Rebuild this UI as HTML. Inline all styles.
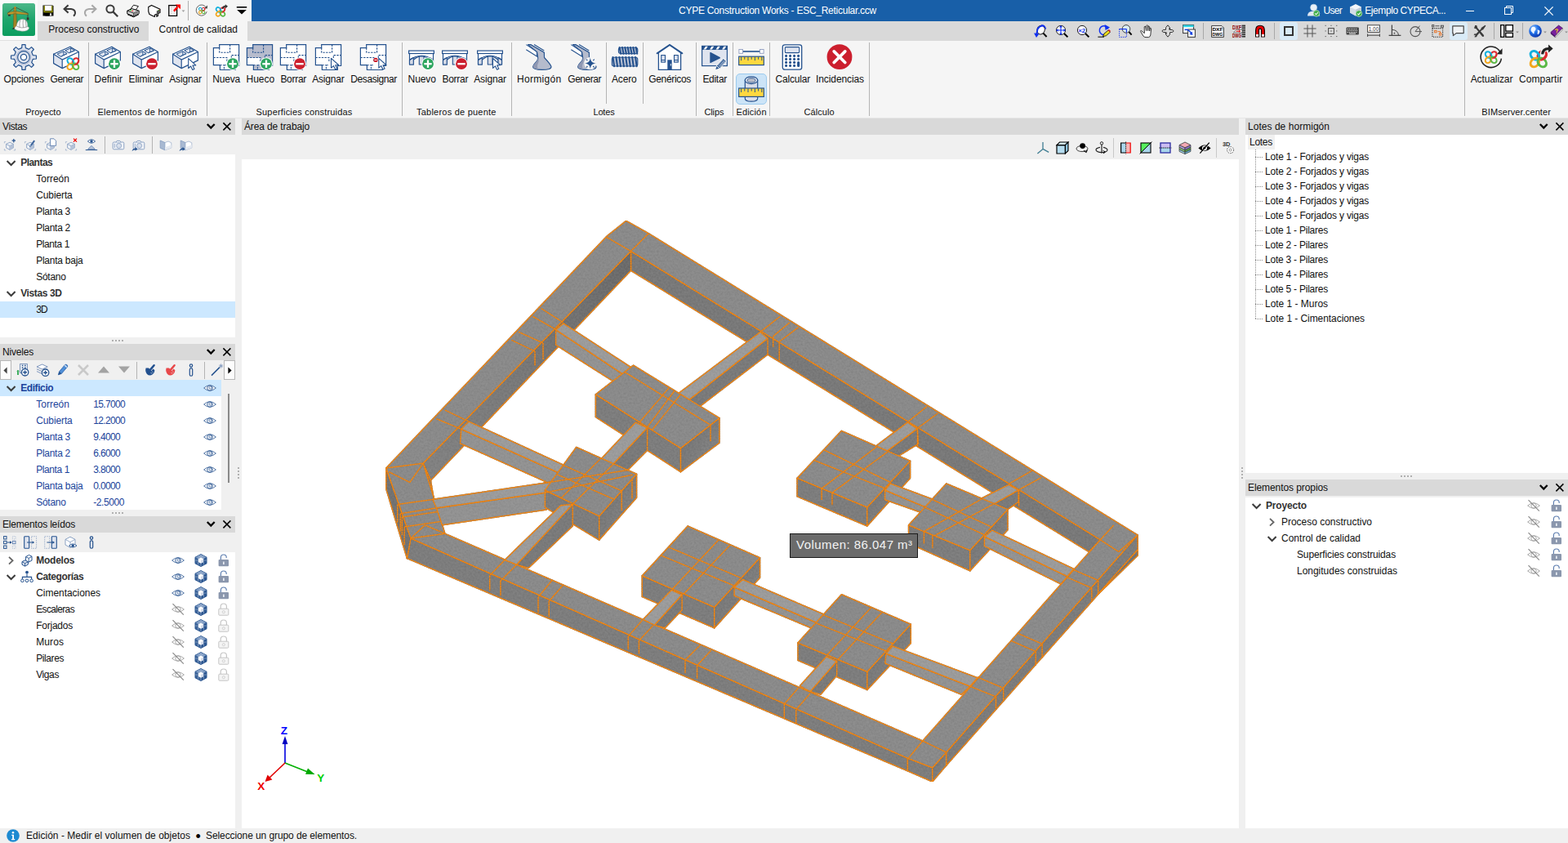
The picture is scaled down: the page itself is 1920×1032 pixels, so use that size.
<!DOCTYPE html>
<html lang="es"><head><meta charset="utf-8"><title>CYPE Construction Works - ESC_Reticular.ccw</title><style>
html,body{margin:0;padding:0;}
body{width:1920px;height:1032px;overflow:hidden;background:#f0f0f0;position:relative;font-family:"Liberation Sans",sans-serif;font-size:12px;}
.b{position:absolute;display:block;}
.t{position:absolute;white-space:nowrap;display:block;}
</style></head>
<body>
<div class="b" style="left:0px;top:0px;width:1920px;height:26px;background:#185fa8;"></div>
<div class="b" style="left:0px;top:0px;width:308px;height:26px;background:#f5f5f5;"></div>
<div class="b" style="left:0px;top:26px;width:1920px;height:24px;background:#d9d9d9;"></div>
<div class="b" style="left:0px;top:0px;width:46px;height:49px;background:#fafafa;"></div>
<div class="b" style="left:0px;top:49px;width:46px;height:1px;background:#e0e0e0;"></div>
<div class="b" style="left:182px;top:26px;width:121px;height:24px;background:#f5f5f5;"></div>
<span class="t" style="left:831.00px;top:4.84px;line-height:16px;color:#fff;letter-spacing:-0.260px;">CYPE Construction Works - ESC_Reticular.ccw</span>
<span class="t" style="left:1620.50px;top:4.84px;line-height:16px;color:#fff;letter-spacing:-0.711px;">User</span>
<span class="t" style="left:1671.20px;top:4.84px;line-height:16px;color:#fff;letter-spacing:-0.413px;">Ejemplo CYPECA...</span>
<span class="t" style="left:59.30px;top:27.84px;line-height:16px;color:#101010;letter-spacing:-0.018px;">Proceso constructivo</span>
<span class="t" style="left:194.50px;top:27.84px;line-height:16px;color:#101010;letter-spacing:-0.012px;">Control de calidad</span>
<div class="b" style="left:0px;top:50px;width:1920px;height:94px;background:#f5f5f5;"></div>
<div class="b" style="left:0px;top:144px;width:1920px;height:1px;background:#e6e6e6;"></div>
<div class="b" style="left:108px;top:52px;width:1px;height:90px;background:#b4b4b4;"></div>
<div class="b" style="left:253px;top:52px;width:1px;height:90px;background:#b4b4b4;"></div>
<div class="b" style="left:492px;top:52px;width:1px;height:90px;background:#b4b4b4;"></div>
<div class="b" style="left:626px;top:52px;width:1px;height:90px;background:#b4b4b4;"></div>
<div class="b" style="left:742px;top:52px;width:1px;height:75px;background:#b4b4b4;"></div>
<div class="b" style="left:787px;top:52px;width:1px;height:75px;background:#b4b4b4;"></div>
<div class="b" style="left:852px;top:52px;width:1px;height:90px;background:#b4b4b4;"></div>
<div class="b" style="left:897px;top:52px;width:1px;height:90px;background:#b4b4b4;"></div>
<div class="b" style="left:942px;top:52px;width:1px;height:90px;background:#b4b4b4;"></div>
<div class="b" style="left:1064px;top:52px;width:1px;height:90px;background:#b4b4b4;"></div>
<div class="b" style="left:1793px;top:52px;width:1px;height:90px;background:#b4b4b4;"></div>
<span class="t" style="left:4.50px;top:89.24px;line-height:16px;color:#101010;letter-spacing:-0.148px;">Opciones</span>
<span class="t" style="left:61.60px;top:89.24px;line-height:16px;color:#101010;letter-spacing:-0.517px;">Generar</span>
<span class="t" style="left:115.50px;top:89.24px;line-height:16px;color:#101010;letter-spacing:-0.027px;">Definir</span>
<span class="t" style="left:157.50px;top:89.24px;line-height:16px;color:#101010;letter-spacing:-0.107px;">Eliminar</span>
<span class="t" style="left:207.20px;top:89.24px;line-height:16px;color:#101010;letter-spacing:-0.127px;">Asignar</span>
<span class="t" style="left:260.30px;top:89.24px;line-height:16px;color:#101010;letter-spacing:-0.198px;">Nueva</span>
<span class="t" style="left:301.60px;top:89.24px;line-height:16px;color:#101010;letter-spacing:-0.058px;">Hueco</span>
<span class="t" style="left:343.40px;top:89.24px;line-height:16px;color:#101010;letter-spacing:-0.291px;">Borrar</span>
<span class="t" style="left:382.20px;top:89.24px;line-height:16px;color:#101010;letter-spacing:-0.170px;">Asignar</span>
<span class="t" style="left:429.30px;top:89.24px;line-height:16px;color:#101010;letter-spacing:-0.420px;">Desasignar</span>
<span class="t" style="left:499.60px;top:89.24px;line-height:16px;color:#101010;letter-spacing:-0.098px;">Nuevo</span>
<span class="t" style="left:541.40px;top:89.24px;line-height:16px;color:#101010;letter-spacing:-0.257px;">Borrar</span>
<span class="t" style="left:580.20px;top:89.24px;line-height:16px;color:#101010;letter-spacing:-0.127px;">Asignar</span>
<span class="t" style="left:633.00px;top:89.24px;line-height:16px;color:#101010;letter-spacing:0.321px;">Hormigón</span>
<span class="t" style="left:695.30px;top:89.24px;line-height:16px;color:#101010;letter-spacing:-0.474px;">Generar</span>
<span class="t" style="left:749.00px;top:89.24px;line-height:16px;color:#101010;letter-spacing:-0.149px;">Acero</span>
<span class="t" style="left:794.20px;top:89.24px;line-height:16px;color:#101010;letter-spacing:-0.321px;">Genéricos</span>
<span class="t" style="left:860.40px;top:89.24px;line-height:16px;color:#101010;letter-spacing:-0.291px;">Editar</span>
<span class="t" style="left:949.60px;top:89.24px;line-height:16px;color:#101010;letter-spacing:-0.204px;">Calcular</span>
<span class="t" style="left:999.00px;top:89.24px;line-height:16px;color:#101010;letter-spacing:-0.094px;">Incidencias</span>
<span class="t" style="left:1800.70px;top:89.24px;line-height:16px;color:#101010;letter-spacing:-0.109px;">Actualizar</span>
<span class="t" style="left:1860.00px;top:89.24px;line-height:16px;color:#101010;letter-spacing:0.068px;">Compartir</span>
<span class="t" style="left:31.30px;top:129.69px;line-height:15px;font-size:11px;color:#101010;letter-spacing:-0.030px;">Proyecto</span>
<span class="t" style="left:119.50px;top:129.69px;line-height:15px;font-size:11px;color:#101010;letter-spacing:0.274px;">Elementos de hormigón</span>
<span class="t" style="left:313.50px;top:129.69px;line-height:15px;font-size:11px;color:#101010;letter-spacing:0.188px;">Superficies construidas</span>
<span class="t" style="left:510.00px;top:129.69px;line-height:15px;font-size:11px;color:#101010;letter-spacing:0.225px;">Tableros de puente</span>
<span class="t" style="left:726.50px;top:129.69px;line-height:15px;font-size:11px;color:#101010;letter-spacing:-0.188px;">Lotes</span>
<span class="t" style="left:862.40px;top:129.69px;line-height:15px;font-size:11px;color:#101010;letter-spacing:-0.108px;">Clips</span>
<span class="t" style="left:901.40px;top:129.69px;line-height:15px;font-size:11px;color:#101010;letter-spacing:0.172px;">Edición</span>
<span class="t" style="left:984.60px;top:129.69px;line-height:15px;font-size:11px;color:#101010;letter-spacing:0.059px;">Cálculo</span>
<span class="t" style="left:1814.30px;top:129.69px;line-height:15px;font-size:11px;color:#101010;letter-spacing:0.096px;">BIMserver.center</span>
<div class="b" style="left:0px;top:144px;width:1920px;height:1px;background:#e6e6e6;"></div>
<div class="b" style="left:901px;top:90px;width:38px;height:38px;background:#cce4f7;border:1px solid #9ccbee;border-radius:5px;box-sizing:border-box;"></div>
<div class="b" style="left:1567px;top:27px;width:22px;height:22px;background:#d9ebf7;border-radius:3px;"></div>
<div class="b" style="left:1775px;top:27px;width:22px;height:22px;background:#d9ebf7;border-radius:3px;"></div>
<div class="b" style="left:1473px;top:28px;width:1px;height:20px;background:#a8a8a8;"></div>
<div class="b" style="left:1560px;top:28px;width:1px;height:20px;background:#a8a8a8;"></div>
<div class="b" style="left:1829px;top:28px;width:1px;height:20px;background:#a8a8a8;"></div>
<div class="b" style="left:1864px;top:28px;width:1px;height:20px;background:#a8a8a8;"></div>
<div class="b" style="left:0px;top:145px;width:288px;height:20px;background:#d9d9d9;"></div>
<div class="b" style="left:0px;top:189px;width:288px;height:224px;background:#fff;"></div>
<div class="b" style="left:0px;top:369px;width:288px;height:20px;background:#cce8ff;"></div>
<div class="b" style="left:0px;top:421px;width:288px;height:20px;background:#d9d9d9;"></div>
<div class="b" style="left:0px;top:465px;width:271px;height:159px;background:#fff;"></div>
<div class="b" style="left:0px;top:465px;width:271px;height:20px;background:#cce8ff;"></div>
<div class="b" style="left:279px;top:482px;width:2px;height:109px;background:#8a8a8a;"></div>
<div class="b" style="left:0px;top:632px;width:288px;height:20px;background:#d9d9d9;"></div>
<div class="b" style="left:0px;top:676px;width:288px;height:338px;background:#fff;"></div>
<div class="b" style="left:296px;top:145px;width:1221px;height:20px;background:#d9d9d9;"></div>
<div class="b" style="left:296px;top:195px;width:1221px;height:819px;background:#fff;"></div>
<div class="b" style="left:1525px;top:145px;width:395px;height:20px;background:#d9d9d9;"></div>
<div class="b" style="left:1525px;top:165px;width:395px;height:414px;background:#fff;"></div>
<div class="b" style="left:1528px;top:165px;width:33px;height:18px;background:#f0f0f0;"></div>
<div class="b" style="left:1525px;top:587px;width:395px;height:20px;background:#d9d9d9;"></div>
<div class="b" style="left:1525px;top:609px;width:395px;height:405px;background:#fff;"></div>
<div class="b" style="left:137px;top:416px;width:2px;height:2px;background:#b0b0b0;"></div>
<div class="b" style="left:141px;top:416px;width:2px;height:2px;background:#b0b0b0;"></div>
<div class="b" style="left:145px;top:416px;width:2px;height:2px;background:#b0b0b0;"></div>
<div class="b" style="left:149px;top:416px;width:2px;height:2px;background:#b0b0b0;"></div>
<div class="b" style="left:137px;top:627px;width:2px;height:2px;background:#b0b0b0;"></div>
<div class="b" style="left:141px;top:627px;width:2px;height:2px;background:#b0b0b0;"></div>
<div class="b" style="left:145px;top:627px;width:2px;height:2px;background:#b0b0b0;"></div>
<div class="b" style="left:149px;top:627px;width:2px;height:2px;background:#b0b0b0;"></div>
<div class="b" style="left:1715px;top:582px;width:2px;height:2px;background:#b0b0b0;"></div>
<div class="b" style="left:1719px;top:582px;width:2px;height:2px;background:#b0b0b0;"></div>
<div class="b" style="left:1723px;top:582px;width:2px;height:2px;background:#b0b0b0;"></div>
<div class="b" style="left:1727px;top:582px;width:2px;height:2px;background:#b0b0b0;"></div>
<div class="b" style="left:291px;top:572px;width:2px;height:2px;background:#b0b0b0;"></div>
<div class="b" style="left:291px;top:576px;width:2px;height:2px;background:#b0b0b0;"></div>
<div class="b" style="left:291px;top:580px;width:2px;height:2px;background:#b0b0b0;"></div>
<div class="b" style="left:291px;top:584px;width:2px;height:2px;background:#b0b0b0;"></div>
<div class="b" style="left:1520px;top:572px;width:2px;height:2px;background:#b0b0b0;"></div>
<div class="b" style="left:1520px;top:576px;width:2px;height:2px;background:#b0b0b0;"></div>
<div class="b" style="left:1520px;top:580px;width:2px;height:2px;background:#b0b0b0;"></div>
<div class="b" style="left:1520px;top:584px;width:2px;height:2px;background:#b0b0b0;"></div>
<span class="t" style="left:3.00px;top:146.84px;line-height:16px;color:#101010;letter-spacing:-0.409px;">Vistas</span>
<span class="t" style="left:299.00px;top:146.84px;line-height:16px;color:#101010;letter-spacing:-0.135px;">Área de trabajo</span>
<span class="t" style="left:1528.00px;top:146.84px;line-height:16px;color:#101010;letter-spacing:0.037px;">Lotes de hormigón</span>
<span class="t" style="left:3.00px;top:422.84px;line-height:16px;color:#101010;letter-spacing:-0.194px;">Niveles</span>
<span class="t" style="left:3.00px;top:633.84px;line-height:16px;color:#101010;letter-spacing:-0.189px;">Elementos leídos</span>
<span class="t" style="left:1528.00px;top:588.84px;line-height:16px;color:#101010;letter-spacing:-0.081px;">Elementos propios</span>
<span class="t" style="left:25.20px;top:190.84px;line-height:16px;color:#333;font-weight:700;letter-spacing:-0.525px;">Plantas</span>
<span class="t" style="left:44.20px;top:210.84px;line-height:16px;color:#101010;letter-spacing:0.016px;">Torreón</span>
<span class="t" style="left:44.20px;top:230.84px;line-height:16px;color:#101010;letter-spacing:-0.107px;">Cubierta</span>
<span class="t" style="left:44.20px;top:250.84px;line-height:16px;color:#101010;letter-spacing:-0.277px;">Planta 3</span>
<span class="t" style="left:44.20px;top:270.84px;line-height:16px;color:#101010;letter-spacing:-0.277px;">Planta 2</span>
<span class="t" style="left:44.20px;top:290.84px;line-height:16px;color:#101010;letter-spacing:-0.402px;">Planta 1</span>
<span class="t" style="left:44.20px;top:310.84px;line-height:16px;color:#101010;letter-spacing:-0.248px;">Planta baja</span>
<span class="t" style="left:44.20px;top:330.84px;line-height:16px;color:#101010;letter-spacing:-0.269px;">Sótano</span>
<span class="t" style="left:25.20px;top:350.84px;line-height:16px;color:#333;font-weight:700;letter-spacing:-0.377px;">Vistas 3D</span>
<span class="t" style="left:44.20px;top:370.84px;line-height:16px;color:#101010;letter-spacing:-0.922px;">3D</span>
<span class="t" style="left:25.20px;top:466.84px;line-height:16px;color:#1b439b;font-weight:700;letter-spacing:-0.414px;">Edificio</span>
<span class="t" style="left:44.20px;top:486.84px;line-height:16px;color:#1b439b;letter-spacing:0.016px;">Torreón</span>
<span class="t" style="left:114.20px;top:486.84px;line-height:16px;color:#1b439b;letter-spacing:-0.651px;">15.7000</span>
<span class="t" style="left:44.20px;top:506.84px;line-height:16px;color:#1b439b;letter-spacing:-0.107px;">Cubierta</span>
<span class="t" style="left:114.20px;top:506.84px;line-height:16px;color:#1b439b;letter-spacing:-0.651px;">12.2000</span>
<span class="t" style="left:44.20px;top:526.84px;line-height:16px;color:#1b439b;letter-spacing:-0.277px;">Planta 3</span>
<span class="t" style="left:114.20px;top:526.84px;line-height:16px;color:#1b439b;letter-spacing:-0.648px;">9.4000</span>
<span class="t" style="left:44.20px;top:546.84px;line-height:16px;color:#1b439b;letter-spacing:-0.277px;">Planta 2</span>
<span class="t" style="left:114.20px;top:546.84px;line-height:16px;color:#1b439b;letter-spacing:-0.648px;">6.6000</span>
<span class="t" style="left:44.20px;top:566.84px;line-height:16px;color:#1b439b;letter-spacing:-0.402px;">Planta 1</span>
<span class="t" style="left:114.20px;top:566.84px;line-height:16px;color:#1b439b;letter-spacing:-0.648px;">3.8000</span>
<span class="t" style="left:44.20px;top:586.84px;line-height:16px;color:#1b439b;letter-spacing:-0.248px;">Planta baja</span>
<span class="t" style="left:114.20px;top:586.84px;line-height:16px;color:#1b439b;letter-spacing:-0.648px;">0.0000</span>
<span class="t" style="left:44.20px;top:606.84px;line-height:16px;color:#1b439b;letter-spacing:-0.269px;">Sótano</span>
<span class="t" style="left:114.20px;top:606.84px;line-height:16px;color:#1b439b;letter-spacing:-0.413px;">-2.5000</span>
<div class="b" style="left:0px;top:624px;width:288px;height:8px;background:#f0f0f0;"></div>
<span class="t" style="left:44.20px;top:677.84px;line-height:16px;color:#333;font-weight:700;letter-spacing:-0.237px;">Modelos</span>
<span class="t" style="left:44.20px;top:697.84px;line-height:16px;color:#333;font-weight:700;letter-spacing:-0.402px;">Categorías</span>
<span class="t" style="left:44.20px;top:717.84px;line-height:16px;color:#101010;letter-spacing:-0.044px;">Cimentaciones</span>
<span class="t" style="left:44.20px;top:737.84px;line-height:16px;color:#101010;letter-spacing:-0.654px;">Escaleras</span>
<span class="t" style="left:44.20px;top:757.84px;line-height:16px;color:#101010;letter-spacing:-0.236px;">Forjados</span>
<span class="t" style="left:44.20px;top:777.84px;line-height:16px;color:#101010;letter-spacing:0.091px;">Muros</span>
<span class="t" style="left:44.20px;top:797.84px;line-height:16px;color:#101010;letter-spacing:-0.413px;">Pilares</span>
<span class="t" style="left:44.20px;top:817.84px;line-height:16px;color:#101010;letter-spacing:-0.399px;">Vigas</span>
<span class="t" style="left:1530.00px;top:165.84px;line-height:16px;color:#101010;letter-spacing:-0.269px;">Lotes</span>
<span class="t" style="left:1549.00px;top:183.84px;line-height:16px;color:#101010;letter-spacing:-0.174px;">Lote 1 - Forjados y vigas</span>
<span class="t" style="left:1549.00px;top:201.84px;line-height:16px;color:#101010;letter-spacing:-0.174px;">Lote 2 - Forjados y vigas</span>
<span class="t" style="left:1549.00px;top:219.84px;line-height:16px;color:#101010;letter-spacing:-0.174px;">Lote 3 - Forjados y vigas</span>
<span class="t" style="left:1549.00px;top:237.84px;line-height:16px;color:#101010;letter-spacing:-0.174px;">Lote 4 - Forjados y vigas</span>
<span class="t" style="left:1549.00px;top:255.84px;line-height:16px;color:#101010;letter-spacing:-0.174px;">Lote 5 - Forjados y vigas</span>
<span class="t" style="left:1549.00px;top:273.84px;line-height:16px;color:#101010;letter-spacing:-0.230px;">Lote 1 - Pilares</span>
<span class="t" style="left:1549.00px;top:291.84px;line-height:16px;color:#101010;letter-spacing:-0.230px;">Lote 2 - Pilares</span>
<span class="t" style="left:1549.00px;top:309.84px;line-height:16px;color:#101010;letter-spacing:-0.230px;">Lote 3 - Pilares</span>
<span class="t" style="left:1549.00px;top:327.84px;line-height:16px;color:#101010;letter-spacing:-0.230px;">Lote 4 - Pilares</span>
<span class="t" style="left:1549.00px;top:345.84px;line-height:16px;color:#101010;letter-spacing:-0.230px;">Lote 5 - Pilares</span>
<span class="t" style="left:1549.00px;top:363.84px;line-height:16px;color:#101010;letter-spacing:-0.025px;">Lote 1 - Muros</span>
<span class="t" style="left:1549.00px;top:381.84px;line-height:16px;color:#101010;letter-spacing:-0.062px;">Lote 1 - Cimentaciones</span>
<svg class="b" style="left:1537px;top:183px;" width="10" height="209" viewBox="0 0 10 209"><path d="M0.5 0V207M0 9.5H9M0 27.5H9M0 45.5H9M0 63.5H9M0 81.5H9M0 99.5H9M0 117.5H9M0 135.5H9M0 153.5H9M0 171.5H9M0 189.5H9M0 207.5H9" stroke="#8c8c8c" stroke-width="1" stroke-dasharray="1 1" fill="none" shape-rendering="crispEdges"/></svg>
<span class="t" style="left:1550.00px;top:610.84px;line-height:16px;color:#333;font-weight:700;letter-spacing:-0.168px;">Proyecto</span>
<span class="t" style="left:1569.00px;top:630.84px;line-height:16px;color:#101010;letter-spacing:-0.018px;">Proceso constructivo</span>
<span class="t" style="left:1569.00px;top:650.84px;line-height:16px;color:#101010;letter-spacing:0.016px;">Control de calidad</span>
<span class="t" style="left:1588.00px;top:670.84px;line-height:16px;color:#101010;letter-spacing:-0.132px;">Superficies construidas</span>
<span class="t" style="left:1588.00px;top:690.84px;line-height:16px;color:#101010;letter-spacing:-0.018px;">Longitudes construidas</span>
<span class="t" style="left:32.00px;top:1014.84px;line-height:16px;color:#101010;letter-spacing:0.025px;">Edición - Medir el volumen de objetos</span>
<span class="t" style="left:239.50px;top:1011.56px;line-height:24px;font-size:18px;">•</span>
<span class="t" style="left:252.00px;top:1014.84px;line-height:16px;color:#101010;letter-spacing:-0.093px;">Seleccione un grupo de elementos.</span>
<svg class="b" style="left:296px;top:195px;" width="1221" height="818" viewBox="296 195 1221 818"><style>.k{stroke:#4a5560;stroke-width:1.6;stroke-opacity:.35;stroke-linejoin:round}.e{fill:none;stroke:#fb870a;stroke-width:1.45;stroke-dasharray:2.6 0.3;stroke-linejoin:round}</style><defs><filter id="nz" x="0" y="0" width="100%" height="100%" color-interpolation-filters="sRGB"><feTurbulence type="fractalNoise" baseFrequency="0.42" numOctaves="2" seed="7" result="n"/><feColorMatrix in="n" type="matrix" values="0.18 0 0 0 0.41  0.18 0 0 0 0.41  0.18 0 0 0 0.41  0 0 0 0 1" result="g"/><feComposite in="g" in2="SourceAlpha" operator="in" result="c"/><feBlend in="c" in2="SourceGraphic" mode="soft-light"/></filter><linearGradient id="gn" x1="1" y1="0" x2="0" y2="1"><stop offset="0" stop-color="#6a6a6a"/><stop offset="0.6" stop-color="#7a7a7a"/><stop offset="1" stop-color="#828282"/></linearGradient><linearGradient id="gr" x1="0" y1="0" x2="1" y2="1"><stop offset="0" stop-color="#707070"/><stop offset="1" stop-color="#888"/></linearGradient></defs><g filter="url(#nz)"><polygon points="772.5,307.5 1347.3,660.8 1333.3,675.5 772.5,331.2" fill="#797979" class="k" /><polygon points="772.5,307.5 1347.3,660.8 1333.3,675.5 772.5,331.2" class="e"/>
<polygon points="772.5,307.5 772.5,331.2 527.4,588.1 518.1,567.2" fill="url(#gn)" class="k" /><polygon points="772.5,307.5 772.5,331.2 527.4,588.1 518.1,567.2" class="e"/>
<polygon points="503.0,659.0 1111.4,928.2 1111.4,943.8 498.4,683.5" fill="#7d7d7d" class="k" /><polygon points="503.0,659.0 1111.4,928.2 1111.4,943.8 498.4,683.5" class="e"/>
<polygon points="1111.4,928.2 1141.7,939.8 1141.7,957.0 1111.4,943.8" fill="#7d7d7d" class="k" /><polygon points="1111.4,928.2 1141.7,939.8 1141.7,957.0 1111.4,943.8" class="e"/>
<polygon points="1141.7,939.8 1158.8,921.0 1158.8,937.0 1141.7,957.0" fill="url(#gr)" class="k" /><polygon points="1141.7,939.8 1158.8,921.0 1158.8,937.0 1141.7,957.0" class="e"/>
<polygon points="1158.8,921.0 1393.0,655.0 1393.2,672.8 1158.8,937.0" fill="url(#gr)" class="k" /><polygon points="1158.8,921.0 1393.0,655.0 1393.2,672.8 1158.8,937.0" class="e"/>
<polygon points="1393.2,672.8 1393.6,679.6 1343.0,729.0" fill="#747474" class="k" /><polygon points="1393.2,672.8 1393.6,679.6 1343.0,729.0" class="e"/>
<polygon points="472.8,573.0 472.8,598.6 498.4,683.5 503.0,659.0" fill="#737373" class="k" /><polygon points="472.8,573.0 472.8,598.6 498.4,683.5 503.0,659.0" class="e"/>
<polygon points="518.1,567.2 527.4,588.1 531.2,611.0 529.5,604.0" fill="url(#gr)" class="k" /><polygon points="518.1,567.2 527.4,588.1 531.2,611.0 529.5,604.0" class="e"/>
<path d="M743.0 289.2 L766.7 270.3 L794.2 285.8 L1393.0 655.0 L1158.8 921.0 L1141.7 939.8 L1111.4 928.2 L503.0 659.0 L472.8 573.0Z M772.5 307.5 L1347.3 660.8 L1129.8 907.0 L544.9 653.3 L518.1 567.2Z" fill="#8a8a8a" fill-rule="evenodd" class="k"/><path d="M743.0 289.2 L766.7 270.3 L794.2 285.8 L1393.0 655.0 L1158.8 921.0 L1141.7 939.8 L1111.4 928.2 L503.0 659.0 L472.8 573.0Z M772.5 307.5 L1347.3 660.8 L1129.8 907.0 L544.9 653.3 L518.1 567.2Z" class="e"/>
<polygon points="680.6,403.7 769.8,462.8 756.8,470.5 680.6,422.2" fill="#929292" class="k" /><polygon points="680.6,403.7 769.8,462.8 756.8,470.5 680.6,422.2" class="e"/>
<polygon points="689.8,395.8 780.4,454.7 769.8,462.8 680.6,403.7" fill="#9b9b9b" class="k" /><polygon points="689.8,395.8 780.4,454.7 769.8,462.8 680.6,403.7" class="e"/>
<polygon points="836.9,494.9 940.0,414.3 940.0,434.0 850.1,502.8" fill="#7a7a7a" class="k" /><polygon points="836.9,494.9 940.0,414.3 940.0,434.0 850.1,502.8" class="e"/>
<polygon points="823.7,486.9 931.0,406.4 940.0,414.3 836.9,494.9" fill="#9b9b9b" class="k" /><polygon points="823.7,486.9 931.0,406.4 940.0,414.3 836.9,494.9" class="e"/>
<polygon points="564.7,525.3 684.5,579.0 672.9,591.8 563.5,542.8" fill="#929292" class="k" /><polygon points="564.7,525.3 684.5,579.0 672.9,591.8 563.5,542.8" class="e"/>
<polygon points="574.0,516.0 693.8,571.0 684.5,579.0 564.7,525.3" fill="#9b9b9b" class="k" /><polygon points="574.0,516.0 693.8,571.0 684.5,579.0 564.7,525.3" class="e"/>
<polygon points="534.4,621.9 675.9,602.0 668.9,624.0 541.4,642.8" fill="#929292" class="k" /><polygon points="534.4,621.9 675.9,602.0 668.9,624.0 541.4,642.8" class="e"/>
<polygon points="529.8,611.4 673.6,590.3 675.9,602.0 534.4,621.9" fill="#9b9b9b" class="k" /><polygon points="529.8,611.4 673.6,590.3 675.9,602.0 534.4,621.9" class="e"/>
<polygon points="1080.4,556.6 1123.2,524.8 1124.5,543.3 1095.8,561.1" fill="#7a7a7a" class="k" /><polygon points="1080.4,556.6 1123.2,524.8 1124.5,543.3 1095.8,561.1" class="e"/>
<polygon points="1067.2,550.0 1111.3,516.9 1123.2,524.8 1080.4,556.6" fill="#9b9b9b" class="k" /><polygon points="1067.2,550.0 1111.3,516.9 1123.2,524.8 1080.4,556.6" class="e"/>
<polygon points="1211.6,620.1 1247.1,600.0 1247.1,614.4 1226.5,628.7" fill="#7a7a7a" class="k" /><polygon points="1211.6,620.1 1247.1,600.0 1247.1,614.4 1226.5,628.7" class="e"/>
<polygon points="1195.6,613.2 1235.2,593.3 1247.1,600.0 1211.6,620.1" fill="#9b9b9b" class="k" /><polygon points="1195.6,613.2 1235.2,593.3 1247.1,600.0 1211.6,620.1" class="e"/>
<polygon points="729.4,482.8 833.5,548.7 833.5,577.7 729.4,510.5" fill="#7d7d7d" class="k" /><polygon points="729.4,482.8 833.5,548.7 833.5,577.7 729.4,510.5" class="e"/>
<polygon points="833.5,548.7 880.9,511.8 880.9,542.1 833.5,577.7" fill="url(#gr)" class="k" /><polygon points="833.5,548.7 880.9,511.8 880.9,542.1 833.5,577.7" class="e"/>
<polygon points="729.4,482.8 775.5,447.2 880.9,511.8 833.5,548.7" fill="#8a8a8a" class="k" /><polygon points="729.4,482.8 775.5,447.2 880.9,511.8 833.5,548.7" class="e"/>
<path d="M783.2 516.9L819.6 474.2" class="k"/><path d="M783.2 516.9L819.6 474.2" class="e"/>
<path d="M792.6 522.8L826.1 478.2" class="k"/><path d="M792.6 522.8L826.1 478.2" class="e"/>
<path d="M798.4 526.5L833.5 482.7" class="k"/><path d="M798.4 526.5L833.5 482.7" class="e"/>
<path d="M764.9 455.4L870.0 520.3" class="k"/><path d="M764.9 455.4L870.0 520.3" class="e"/>
<path d="M792.6 522.8L792.6 536.8" class="k"/><path d="M792.6 522.8L792.6 536.8" class="e"/>
<path d="M870.0 520.3L870.0 540.3" class="k"/><path d="M870.0 520.3L870.0 540.3" class="e"/>
<polygon points="976.1,585.4 1061.8,621.0 1061.8,644.0 976.1,607.8" fill="#7d7d7d" class="k" /><polygon points="976.1,585.4 1061.8,621.0 1061.8,644.0 976.1,607.8" class="e"/>
<polygon points="1061.8,621.0 1114.5,564.3 1114.5,585.4 1061.8,644.0" fill="url(#gr)" class="k" /><polygon points="1061.8,621.0 1114.5,564.3 1114.5,585.4 1061.8,644.0" class="e"/>
<polygon points="976.1,585.4 1030.4,527.4 1114.5,564.3 1061.8,621.0" fill="#8a8a8a" class="k" /><polygon points="976.1,585.4 1030.4,527.4 1114.5,564.3 1061.8,621.0" class="e"/>
<path d="M1006.1 597.9L1074.1 546.6" class="k"/><path d="M1006.1 597.9L1074.1 546.6" class="e"/>
<path d="M1019.0 603.2L1087.6 552.5" class="k"/><path d="M1019.0 603.2L1087.6 552.5" class="e"/>
<path d="M996.7 563.4L1083.4 597.8" class="k"/><path d="M996.7 563.4L1083.4 597.8" class="e"/>
<path d="M1008.7 550.6L1090.3 590.4" class="k"/><path d="M1008.7 550.6L1090.3 590.4" class="e"/>
<path d="M1006.1 597.9L1006.1 611.9" class="k"/><path d="M1006.1 597.9L1006.1 611.9" class="e"/>
<path d="M1019.0 603.2L1019.0 618.2" class="k"/><path d="M1019.0 603.2L1019.0 618.2" class="e"/>
<polygon points="792.6,523.7 792.6,551.3 769.2,574.9 745.6,573.7" fill="#7a7a7a" class="k" /><polygon points="792.6,523.7 792.6,551.3 769.2,574.9 745.6,573.7" class="e"/>
<polygon points="778.2,517.1 792.6,523.7 745.6,573.7 729.8,568.5" fill="#9b9b9b" class="k" /><polygon points="778.2,517.1 792.6,523.7 745.6,573.7 729.8,568.5" class="e"/>
<polygon points="1083.6,600.0 1142.0,624.5 1137.0,630.6 1083.6,611.8" fill="#929292" class="k" /><polygon points="1083.6,600.0 1142.0,624.5 1137.0,630.6 1083.6,611.8" class="e"/>
<polygon points="1090.2,592.0 1148.7,613.6 1142.0,624.5 1083.6,600.0" fill="#9b9b9b" class="k" /><polygon points="1090.2,592.0 1148.7,613.6 1142.0,624.5 1083.6,600.0" class="e"/>
<polygon points="667.4,600.1 733.7,631.8 733.7,661.0 667.4,621.0" fill="#7d7d7d" class="k" /><polygon points="667.4,600.1 733.7,631.8 733.7,661.0 667.4,621.0" class="e"/>
<polygon points="733.7,631.8 779.5,580.3 779.5,609.3 733.7,661.0" fill="url(#gr)" class="k" /><polygon points="733.7,631.8 779.5,580.3 779.5,609.3 733.7,661.0" class="e"/>
<polygon points="667.4,600.1 705.7,547.4 779.5,580.3 733.7,631.8" fill="#8a8a8a" class="k" /><polygon points="667.4,600.1 705.7,547.4 779.5,580.3 733.7,631.8" class="e"/>
<path d="M687.3 609.6L736.0 560.9" class="k"/><path d="M687.3 609.6L736.0 560.9" class="e"/>
<path d="M701.9 616.6L751.5 567.8" class="k"/><path d="M701.9 616.6L751.5 567.8" class="e"/>
<path d="M681.6 580.6L752.0 611.2" class="k"/><path d="M681.6 580.6L752.0 611.2" class="e"/>
<path d="M689.6 569.5L761.2 600.9" class="k"/><path d="M689.6 569.5L761.2 600.9" class="e"/>
<path d="M761.2 600.9L761.2 624.9" class="k"/><path d="M761.2 600.9L761.2 624.9" class="e"/>
<path d="M774.0 586.5L774.0 610.5" class="k"/><path d="M774.0 586.5L774.0 610.5" class="e"/>
<path d="M664.7 591.6L770.2 575.3" class="k"/><path d="M664.7 591.6L770.2 575.3" class="e"/>
<path d="M667.0 603.3L774.9 581.2" class="k"/><path d="M667.0 603.3L774.9 581.2" class="e"/>
<polygon points="1112.6,642.9 1187.8,673.7 1187.8,698.8 1112.6,665.0" fill="#7d7d7d" class="k" /><polygon points="1112.6,642.9 1187.8,673.7 1187.8,698.8 1112.6,665.0" class="e"/>
<polygon points="1187.8,673.7 1233.9,623.6 1233.9,648.7 1187.8,698.8" fill="url(#gr)" class="k" /><polygon points="1187.8,673.7 1233.9,623.6 1233.9,648.7 1187.8,698.8" class="e"/>
<polygon points="1112.6,642.9 1158.8,592.0 1233.9,623.6 1187.8,673.7" fill="#8a8a8a" class="k" /><polygon points="1112.6,642.9 1158.8,592.0 1233.9,623.6 1187.8,673.7" class="e"/>
<path d="M1131.4 650.6L1202.7 610.5" class="k"/><path d="M1131.4 650.6L1202.7 610.5" class="e"/>
<path d="M1144.2 655.8L1217.4 616.6" class="k"/><path d="M1144.2 655.8L1217.4 616.6" class="e"/>
<path d="M1132.5 621.0L1205.3 654.7" class="k"/><path d="M1132.5 621.0L1205.3 654.7" class="e"/>
<path d="M1141.2 611.3L1214.1 645.1" class="k"/><path d="M1141.2 611.3L1214.1 645.1" class="e"/>
<path d="M1131.4 650.6L1131.4 665.6" class="k"/><path d="M1131.4 650.6L1131.4 665.6" class="e"/>
<path d="M1141.9 654.9L1141.9 670.9" class="k"/><path d="M1141.9 654.9L1141.9 670.9" class="e"/>
<polygon points="701.2,617.5 701.2,643.9 647.1,695.3 632.6,691.3" fill="#7a7a7a" class="k" /><polygon points="701.2,617.5 701.2,643.9 647.1,695.3 632.6,691.3" class="e"/>
<polygon points="686.7,618.8 701.2,617.5 632.6,691.3 618.1,685.5" fill="#9b9b9b" class="k" /><polygon points="686.7,618.8 701.2,617.5 632.6,691.3 618.1,685.5" class="e"/>
<polygon points="1205.4,656.9 1307.0,705.7 1299.2,715.0 1205.4,668.5" fill="#929292" class="k" /><polygon points="1205.4,656.9 1307.0,705.7 1299.2,715.0 1205.4,668.5" class="e"/>
<polygon points="1214.7,649.1 1314.7,696.4 1307.0,705.7 1205.4,656.9" fill="#9b9b9b" class="k" /><polygon points="1214.7,649.1 1314.7,696.4 1307.0,705.7 1205.4,656.9" class="e"/>
<polygon points="786.3,704.9 874.7,743.3 874.7,768.8 786.3,730.5" fill="#7d7d7d" class="k" /><polygon points="786.3,704.9 874.7,743.3 874.7,768.8 786.3,730.5" class="e"/>
<polygon points="874.7,743.3 930.5,682.8 930.5,707.2 874.7,768.8" fill="url(#gr)" class="k" /><polygon points="874.7,743.3 930.5,682.8 930.5,707.2 874.7,768.8" class="e"/>
<polygon points="786.3,704.9 842.1,644.0 930.5,682.8 874.7,743.3" fill="#8a8a8a" class="k" /><polygon points="786.3,704.9 842.1,644.0 930.5,682.8 874.7,743.3" class="e"/>
<path d="M823.4 721.0L880.1 660.7" class="k"/><path d="M823.4 721.0L880.1 660.7" class="e"/>
<path d="M837.3 727.1L894.3 666.9" class="k"/><path d="M837.3 727.1L894.3 666.9" class="e"/>
<path d="M809.2 679.9L898.9 717.0" class="k"/><path d="M809.2 679.9L898.9 717.0" class="e"/>
<path d="M818.6 669.7L907.6 707.6" class="k"/><path d="M818.6 669.7L907.6 707.6" class="e"/>
<polygon points="899.1,718.8 1007.4,765.5 1001.6,772.3 899.1,729.3" fill="#929292" class="k" /><polygon points="899.1,718.8 1007.4,765.5 1001.6,772.3 899.1,729.3" class="e"/>
<polygon points="909.5,709.5 1015.5,754.9 1007.4,765.5 899.1,718.8" fill="#9b9b9b" class="k" /><polygon points="909.5,709.5 1015.5,754.9 1007.4,765.5 899.1,718.8" class="e"/>
<polygon points="835.1,728.1 835.1,746.7 814.2,768.8 801.4,765.3" fill="#7a7a7a" class="k" /><polygon points="835.1,728.1 835.1,746.7 814.2,768.8 801.4,765.3" class="e"/>
<polygon points="822.3,722.3 835.1,728.1 801.4,765.3 787.4,758.4" fill="#9b9b9b" class="k" /><polygon points="822.3,722.3 835.1,728.1 801.4,765.3 787.4,758.4" class="e"/>
<polygon points="977.0,787.0 1061.9,822.3 1061.9,844.4 977.0,808.4" fill="#7d7d7d" class="k" /><polygon points="977.0,787.0 1061.9,822.3 1061.9,844.4 977.0,808.4" class="e"/>
<polygon points="1061.9,822.3 1115.3,764.2 1115.3,787.4 1061.9,844.4" fill="url(#gr)" class="k" /><polygon points="1061.9,822.3 1115.3,764.2 1115.3,787.4 1061.9,844.4" class="e"/>
<polygon points="977.0,787.0 1030.5,727.7 1115.3,764.2 1061.9,822.3" fill="#8a8a8a" class="k" /><polygon points="977.0,787.0 1030.5,727.7 1115.3,764.2 1061.9,822.3" class="e"/>
<path d="M1012.7 801.8L1067.0 743.4" class="k"/><path d="M1012.7 801.8L1067.0 743.4" class="e"/>
<path d="M1026.0 807.4L1080.5 749.2" class="k"/><path d="M1026.0 807.4L1080.5 749.2" class="e"/>
<path d="M998.9 762.7L1085.1 797.1" class="k"/><path d="M998.9 762.7L1085.1 797.1" class="e"/>
<path d="M1007.9 752.7L1093.4 788.0" class="k"/><path d="M1007.9 752.7L1093.4 788.0" class="e"/>
<polygon points="1085.0,800.2 1187.8,840.2 1177.3,850.2 1083.7,812.0" fill="#929292" class="k" /><polygon points="1085.0,800.2 1187.8,840.2 1177.3,850.2 1083.7,812.0" class="e"/>
<polygon points="1093.0,791.0 1197.0,829.7 1187.8,840.2 1085.0,800.2" fill="#9b9b9b" class="k" /><polygon points="1093.0,791.0 1197.0,829.7 1187.8,840.2 1085.0,800.2" class="e"/>
<polygon points="1024.7,809.5 1024.7,827.0 1004.9,850.2 992.1,846.7" fill="#7a7a7a" class="k" /><polygon points="1024.7,809.5 1024.7,827.0 1004.9,850.2 992.1,846.7" class="e"/>
<polygon points="1011.9,803.7 1024.7,809.5 992.1,846.7 979.3,839.8" fill="#9b9b9b" class="k" /><polygon points="1011.9,803.7 1024.7,809.5 992.1,846.7 979.3,839.8" class="e"/>
<path d="M955.0 387.5L931.7 405.8" class="k"/><path d="M955.0 387.5L931.7 405.8" class="e"/>
<path d="M966.7 395.0L946.7 411.7" class="k"/><path d="M966.7 395.0L946.7 411.7" class="e"/>
<path d="M946.7 411.7L946.7 424.7" class="k"/><path d="M946.7 411.7L946.7 424.7" class="e"/>
<path d="M977.5 400.8L954.2 418.3" class="k"/><path d="M977.5 400.8L954.2 418.3" class="e"/>
<path d="M954.2 418.3L954.2 441.3" class="k"/><path d="M954.2 418.3L954.2 441.3" class="e"/>
<path d="M1135.0 497.6L1111.9 516.3" class="k"/><path d="M1135.0 497.6L1111.9 516.3" class="e"/>
<path d="M1148.3 506.0L1123.5 524.2" class="k"/><path d="M1148.3 506.0L1123.5 524.2" class="e"/>
<path d="M1123.5 524.2L1123.5 546.2" class="k"/><path d="M1123.5 524.2L1123.5 546.2" class="e"/>
<path d="M1264.5 575.7L1235.2 592.5" class="k"/><path d="M1264.5 575.7L1235.2 592.5" class="e"/>
<path d="M1275.0 584.6L1247.6 599.6" class="k"/><path d="M1275.0 584.6L1247.6 599.6" class="e"/>
<path d="M1247.6 599.6L1247.6 620.6" class="k"/><path d="M1247.6 599.6L1247.6 620.6" class="e"/>
<path d="M1363.6 643.0L1347.3 660.8" class="k"/><path d="M1363.6 643.0L1347.3 660.8" class="e"/>
<path d="M662.5 377.5L690.0 395.0" class="k"/><path d="M662.5 377.5L690.0 395.0" class="e"/>
<path d="M652.5 387.5L681.3 403.8" class="k"/><path d="M652.5 387.5L681.3 403.8" class="e"/>
<path d="M635.0 406.3L665.0 420.0" class="k"/><path d="M635.0 406.3L665.0 420.0" class="e"/>
<path d="M665.0 420.0L665.0 440.0" class="k"/><path d="M665.0 420.0L665.0 440.0" class="e"/>
<path d="M626.3 416.3L655.0 430.0" class="k"/><path d="M626.3 416.3L655.0 430.0" class="e"/>
<path d="M655.0 430.0L655.0 448.0" class="k"/><path d="M655.0 430.0L655.0 448.0" class="e"/>
<path d="M544.9 502.1L574.0 516.0" class="k"/><path d="M544.9 502.1L574.0 516.0" class="e"/>
<path d="M534.4 512.6L564.7 525.3" class="k"/><path d="M534.4 512.6L564.7 525.3" class="e"/>
<path d="M743.0 290.5L772.5 307.5" class="k"/><path d="M743.0 290.5L772.5 307.5" class="e"/>
<path d="M794.2 285.8L772.5 307.5" class="k"/><path d="M794.2 285.8L772.5 307.5" class="e"/>
<path d="M472.8 573.0L518.1 567.2" class="k"/><path d="M472.8 573.0L518.1 567.2" class="e"/>
<path d="M476.3 577.7L501.9 590.5" class="k"/><path d="M476.3 577.7L501.9 590.5" class="e"/>
<path d="M501.9 590.5L518.1 567.2" class="k"/><path d="M501.9 590.5L518.1 567.2" class="e"/>
<path d="M618.1 685.5L599.7 704.5" class="k"/><path d="M618.1 685.5L599.7 704.5" class="e"/>
<path d="M599.7 704.5L599.7 723.0" class="k"/><path d="M599.7 704.5L599.7 723.0" class="e"/>
<path d="M632.6 691.3L612.9 711.1" class="k"/><path d="M632.6 691.3L612.9 711.1" class="e"/>
<path d="M612.9 711.1L612.9 729.6" class="k"/><path d="M612.9 711.1L612.9 729.6" class="e"/>
<path d="M676.1 710.3L659.0 730.9" class="k"/><path d="M676.1 710.3L659.0 730.9" class="e"/>
<path d="M659.0 730.9L659.0 749.9" class="k"/><path d="M659.0 730.9L659.0 749.9" class="e"/>
<path d="M689.3 716.4L672.2 736.1" class="k"/><path d="M689.3 716.4L672.2 736.1" class="e"/>
<path d="M672.2 736.1L672.2 755.1" class="k"/><path d="M672.2 736.1L672.2 755.1" class="e"/>
<path d="M786.4 759.3L769.2 779.1" class="k"/><path d="M786.4 759.3L769.2 779.1" class="e"/>
<path d="M769.2 779.1L769.2 795.1" class="k"/><path d="M769.2 779.1L769.2 795.1" class="e"/>
<path d="M799.5 765.9L782.4 784.3" class="k"/><path d="M799.5 765.9L782.4 784.3" class="e"/>
<path d="M782.4 784.3L782.4 800.3" class="k"/><path d="M782.4 784.3L782.4 800.3" class="e"/>
<path d="M857.5 789.6L839.0 808.0" class="k"/><path d="M857.5 789.6L839.0 808.0" class="e"/>
<path d="M839.0 808.0L839.0 824.0" class="k"/><path d="M839.0 808.0L839.0 824.0" class="e"/>
<path d="M870.7 796.2L853.6 814.7" class="k"/><path d="M870.7 796.2L853.6 814.7" class="e"/>
<path d="M853.6 814.7L853.6 830.7" class="k"/><path d="M853.6 814.7L853.6 830.7" class="e"/>
<path d="M977.4 842.3L960.3 862.0" class="k"/><path d="M977.4 842.3L960.3 862.0" class="e"/>
<path d="M960.3 862.0L960.3 879.0" class="k"/><path d="M960.3 862.0L960.3 879.0" class="e"/>
<path d="M992.0 849.0L974.8 868.7" class="k"/><path d="M992.0 849.0L974.8 868.7" class="e"/>
<path d="M974.8 868.7L974.8 885.7" class="k"/><path d="M974.8 868.7L974.8 885.7" class="e"/>
<path d="M1129.8 907.0L1111.4 929.3" class="k"/><path d="M1129.8 907.0L1111.4 929.3" class="e"/>
<path d="M1197.0 829.0L1228.7 842.3" class="k"/><path d="M1197.0 829.0L1228.7 842.3" class="e"/>
<path d="M1228.7 842.3L1228.7 858.3" class="k"/><path d="M1228.7 842.3L1228.7 858.3" class="e"/>
<path d="M1187.8 840.2L1219.5 852.9" class="k"/><path d="M1187.8 840.2L1219.5 852.9" class="e"/>
<path d="M1219.5 852.9L1219.5 868.9" class="k"/><path d="M1219.5 852.9L1219.5 868.9" class="e"/>
<path d="M1245.8 775.1L1276.1 788.3" class="k"/><path d="M1245.8 775.1L1276.1 788.3" class="e"/>
<path d="M1276.1 788.3L1276.1 805.3" class="k"/><path d="M1276.1 788.3L1276.1 805.3" class="e"/>
<path d="M1237.9 784.3L1268.2 797.5" class="k"/><path d="M1237.9 784.3L1268.2 797.5" class="e"/>
<path d="M1268.2 797.5L1268.2 814.5" class="k"/><path d="M1268.2 797.5L1268.2 814.5" class="e"/>
<path d="M1306.4 706.6L1336.8 719.8" class="k"/><path d="M1306.4 706.6L1336.8 719.8" class="e"/>
<path d="M1336.8 719.8L1336.8 736.8" class="k"/><path d="M1336.8 719.8L1336.8 736.8" class="e"/>
<path d="M1314.4 697.5L1344.7 710.5" class="k"/><path d="M1314.4 697.5L1344.7 710.5" class="e"/>
<path d="M1344.7 710.5L1344.7 727.5" class="k"/><path d="M1344.7 710.5L1344.7 727.5" class="e"/>
<path d="M1129.8 907.0L1158.8 921.0" class="k"/><path d="M1129.8 907.0L1158.8 921.0" class="e"/>
<path d="M1347.3 660.8L1369.8 675.5" class="k"/><path d="M1347.3 660.8L1369.8 675.5" class="e"/>
<path d="M1369.8 675.5L1393.0 655.3" class="k"/><path d="M1369.8 675.5L1393.0 655.3" class="e"/>
<path d="M531.6 611.2L486.7 617.5" class="k"/><path d="M531.6 611.2L486.7 617.5" class="e"/>
<path d="M486.7 617.5L486.7 639.5" class="k"/><path d="M486.7 617.5L486.7 639.5" class="e"/>
<path d="M535.8 621.7L490.2 628.7" class="k"/><path d="M535.8 621.7L490.2 628.7" class="e"/>
<path d="M490.2 628.7L490.2 650.7" class="k"/><path d="M490.2 628.7L490.2 650.7" class="e"/>
<path d="M535.1 626.6L492.3 633.0" class="k"/><path d="M535.1 626.6L492.3 633.0" class="e"/>
<path d="M492.3 633.0L492.3 655.0" class="k"/><path d="M492.3 633.0L492.3 655.0" class="e"/>
<path d="M538.7 638.6L495.1 644.9" class="k"/><path d="M538.7 638.6L495.1 644.9" class="e"/>
<path d="M495.1 644.9L495.1 666.9" class="k"/><path d="M495.1 644.9L495.1 666.9" class="e"/>
<path d="M503.0 659.0L544.9 653.3" class="k"/><path d="M503.0 659.0L544.9 653.3" class="e"/>
<path d="M503.0 659.0L520.4 642.8" class="k"/><path d="M503.0 659.0L520.4 642.8" class="e"/>
<path d="M520.4 642.8L544.9 653.3" class="k"/><path d="M520.4 642.8L544.9 653.3" class="e"/></g></svg><div class="b" style="left:967px;top:653px;width:157px;height:30px;background:#6b6b6b;border:1px solid #1a1a1a;box-sizing:border-box;"></div><span class="t" style="left:975.00px;top:657.40px;line-height:20px;font-size:15px;color:#f2f2f2;letter-spacing:0.457px;">Volumen: 86.047 m³</span><svg class="b" style="left:300px;top:880px;" width="110" height="100" viewBox="300 880 110 100"><line x1="349" y1="934" x2="349" y2="908" stroke="#0000e0" stroke-width="1.6"/><polygon points="349,901 345.6,911 352.4,911" fill="#0000c0"/><line x1="349" y1="934" x2="378" y2="945.5" stroke="#00b000" stroke-width="1.6"/><polygon points="385.5,948 374,947.8 377,940.5" fill="#00a800"/><line x1="349" y1="934" x2="330" y2="952" stroke="#e00000" stroke-width="1.6"/><polygon points="324.5,957 327.6,948.5 333.4,954.6" fill="#e00000"/><text x="343.8" y="898.5" font-size="13.5" font-weight="700" fill="#0000ff" font-family="'Liberation Sans',sans-serif">Z</text><text x="388.3" y="956.8" font-size="13.5" font-weight="700" fill="#00d000" font-family="'Liberation Sans',sans-serif">Y</text><text x="315.3" y="967" font-size="13.5" font-weight="700" fill="#f00000" font-family="'Liberation Sans',sans-serif">X</text></svg>
<svg class="b" style="left:13px;top:54px;overflow:visible;" width="32" height="32" viewBox="0 0 32 32"><path d="M13.70 4.63L13.98 0.53L18.02 0.53L18.30 4.63L22.41 6.33L25.51 3.63L28.37 6.49L25.67 9.59L27.37 13.70L31.47 13.98L31.47 18.02L27.37 18.30L25.67 22.41L28.37 25.51L25.51 28.37L22.41 25.67L18.30 27.37L18.02 31.47L13.98 31.47L13.70 27.37L9.59 25.67L6.49 28.37L3.63 25.51L6.33 22.41L4.63 18.30L0.53 18.02L0.53 13.98L4.63 13.70L6.33 9.59L3.63 6.49L6.49 3.63L9.59 6.33Z" fill="#dfe4ef" stroke="#25528e" stroke-width="1.2" stroke-linejoin="round"/><circle cx="16" cy="16" r="9" fill="none" stroke="#8f9cc0" stroke-width="0.6"/><circle cx="16" cy="16" r="7.4" fill="none" stroke="#25528e" stroke-width="1.1"/><circle cx="16" cy="16" r="3.6" fill="#fff" stroke="#25528e" stroke-width="1.2"/></svg><svg class="b" style="left:65px;top:54px;overflow:visible;" width="32" height="32" viewBox="0 0 32 32"><path d="M0.6 12.2L20.9 3.2L31.4 9.5V19.9L11.2 29.6L0.6 23.4Z" fill="#fff" stroke="#25528e" stroke-width="1.2" stroke-linejoin="round"/><path d="M0.6 12.2L11.2 19.1V29.6L0.6 23.4Z" fill="#dfe4ef" stroke="#25528e" stroke-width="1.2" stroke-linejoin="round"/><path d="M11.2 19.1L31.4 9.5" stroke="#25528e" stroke-width="1.2" fill="none"/><path d="M5 12.3L12.8 8.8L17.2 11.6L9.5 15.3Z M14.8 7.9L21.6 4.9L26.6 7.9L19.3 10.8Z" fill="#dfe4ef" stroke="#25528e" stroke-width="1" stroke-linejoin="round"/><path d="M12.8 8.8V13.6M21.6 4.9V9.8M12.8 13.6L9.5 15.3M12.8 13.6L17 11.7M21.6 9.8L19.3 10.8M21.6 9.8L26 8" stroke="#25528e" stroke-width="0.9" fill="none"/><circle cx="24.4" cy="24.2" r="8.2" fill="#fff"/><ellipse cx="27.50" cy="21.10" rx="4.22" ry="3.23" transform="rotate(-45 27.50 21.10)" fill="none" stroke="#de2a30" stroke-width="2.1"/><ellipse cx="21.30" cy="21.10" rx="4.22" ry="3.23" transform="rotate(45 21.30 21.10)" fill="none" stroke="#12b0dd" stroke-width="2.1"/><ellipse cx="21.30" cy="27.30" rx="4.22" ry="3.23" transform="rotate(-45 21.30 27.30)" fill="none" stroke="#f3a71c" stroke-width="2.1"/><ellipse cx="27.50" cy="27.30" rx="4.22" ry="3.23" transform="rotate(45 27.50 27.30)" fill="none" stroke="#5ab846" stroke-width="2.1"/><ellipse cx="27.50" cy="21.10" rx="4.22" ry="3.23" transform="rotate(-45 27.50 21.10)" fill="none" stroke="#de2a30" stroke-width="2.1" pathLength="100" stroke-dasharray="30 70" stroke-dashoffset="-8"/></svg><svg class="b" style="left:116px;top:54px;overflow:visible;" width="32" height="32" viewBox="0 0 32 32"><path d="M0.6 12.2L20.9 3.2L31.4 9.5V19.9L11.2 29.6L0.6 23.4Z" fill="#fff" stroke="#25528e" stroke-width="1.2" stroke-linejoin="round"/><path d="M0.6 12.2L11.2 19.1V29.6L0.6 23.4Z" fill="#dfe4ef" stroke="#25528e" stroke-width="1.2" stroke-linejoin="round"/><path d="M11.2 19.1L31.4 9.5" stroke="#25528e" stroke-width="1.2" fill="none"/><path d="M5 12.3L12.8 8.8L17.2 11.6L9.5 15.3Z M14.8 7.9L21.6 4.9L26.6 7.9L19.3 10.8Z" fill="#dfe4ef" stroke="#25528e" stroke-width="1" stroke-linejoin="round"/><path d="M12.8 8.8V13.6M21.6 4.9V9.8M12.8 13.6L9.5 15.3M12.8 13.6L17 11.7M21.6 9.8L19.3 10.8M21.6 9.8L26 8" stroke="#25528e" stroke-width="0.9" fill="none"/><circle cx="24" cy="24.2" r="7.9" fill="#fff"/><circle cx="24" cy="24.2" r="6.9" fill="#2ca55f"/><path d="M19.3 24.2h9.4" stroke="#fff" stroke-width="2.3" fill="none"/><path d="M24 19.5v9.4" stroke="#fff" stroke-width="2.3" fill="none"/></svg><svg class="b" style="left:162px;top:54px;overflow:visible;" width="32" height="32" viewBox="0 0 32 32"><path d="M0.6 12.2L20.9 3.2L31.4 9.5V19.9L11.2 29.6L0.6 23.4Z" fill="#fff" stroke="#25528e" stroke-width="1.2" stroke-linejoin="round"/><path d="M0.6 12.2L11.2 19.1V29.6L0.6 23.4Z" fill="#dfe4ef" stroke="#25528e" stroke-width="1.2" stroke-linejoin="round"/><path d="M11.2 19.1L31.4 9.5" stroke="#25528e" stroke-width="1.2" fill="none"/><path d="M5 12.3L12.8 8.8L17.2 11.6L9.5 15.3Z M14.8 7.9L21.6 4.9L26.6 7.9L19.3 10.8Z" fill="#dfe4ef" stroke="#25528e" stroke-width="1" stroke-linejoin="round"/><path d="M12.8 8.8V13.6M21.6 4.9V9.8M12.8 13.6L9.5 15.3M12.8 13.6L17 11.7M21.6 9.8L19.3 10.8M21.6 9.8L26 8" stroke="#25528e" stroke-width="0.9" fill="none"/><circle cx="24" cy="24.2" r="7.9" fill="#fff"/><circle cx="24" cy="24.2" r="6.9" fill="#cc1f2e"/><path d="M19.3 24.2h9.4" stroke="#fff" stroke-width="2.3" fill="none"/></svg><svg class="b" style="left:211px;top:54px;overflow:visible;" width="32" height="32" viewBox="0 0 32 32"><path d="M0.6 12.2L20.9 3.2L31.4 9.5V19.9L11.2 29.6L0.6 23.4Z" fill="#fff" stroke="#25528e" stroke-width="1.2" stroke-linejoin="round"/><path d="M0.6 12.2L11.2 19.1V29.6L0.6 23.4Z" fill="#dfe4ef" stroke="#25528e" stroke-width="1.2" stroke-linejoin="round"/><path d="M11.2 19.1L31.4 9.5" stroke="#25528e" stroke-width="1.2" fill="none"/><path d="M5 12.3L12.8 8.8L17.2 11.6L9.5 15.3Z M14.8 7.9L21.6 4.9L26.6 7.9L19.3 10.8Z" fill="#dfe4ef" stroke="#25528e" stroke-width="1" stroke-linejoin="round"/><path d="M12.8 8.8V13.6M21.6 4.9V9.8M12.8 13.6L9.5 15.3M12.8 13.6L17 11.7M21.6 9.8L19.3 10.8M21.6 9.8L26 8" stroke="#25528e" stroke-width="0.9" fill="none"/><g transform="translate(19.4 17.4)"><path d="M0.3 0.3V12.2L3.2 9.6L5.4 14L7.6 13L5.5 8.7L9.4 8.5Z" fill="#fff" stroke="#25528e" stroke-width="1.1" stroke-linejoin="round"/></g></svg><svg class="b" style="left:261px;top:54px;overflow:visible;" width="32" height="32" viewBox="0 0 32 32"><path d="M7.7 0.6H31.6V26.5H27.3V31.5H8.4V25.7H0.4V4.6H7.7Z" fill="#fff"/><path d="M7.7 0.6H31.6V26.5H27.3V31.5H8.4V25.7H0.4V4.6H7.7Z" fill="none" stroke="#25528e" stroke-width="1.2"/><path d="M7.7 4.6V10.3H20.6V0.6M0.4 16.5H16.9V22M22.3 17V13.6H31.6M8.4 25.7H13.4V31.5M13.4 25.7H17" fill="none" stroke="#25528e" stroke-width="1.1" stroke-dasharray="2.4 1.3"/><circle cx="24" cy="24.2" r="7.9" fill="#fff"/><circle cx="24" cy="24.2" r="6.9" fill="#2ca55f"/><path d="M19.3 24.2h9.4" stroke="#fff" stroke-width="2.3" fill="none"/><path d="M24 19.5v9.4" stroke="#fff" stroke-width="2.3" fill="none"/></svg><svg class="b" style="left:302px;top:54px;overflow:visible;" width="32" height="32" viewBox="0 0 32 32"><path d="M7.7 0.6H31.6V26.5H27.3V31.5H8.4V25.7H0.4V4.6H7.7Z" fill="#b7bccd"/><path d="M0.4 16.5H16.9V25.7H0.4Z" fill="#fff"/><path d="M7.7 0.6H31.6V26.5H27.3V31.5H8.4V25.7H0.4V4.6H7.7Z" fill="none" stroke="#25528e" stroke-width="1.2"/><path d="M7.7 4.6V10.3H20.6V0.6M0.4 16.5H16.9V22M22.3 17V13.6H31.6M8.4 25.7H13.4V31.5M13.4 25.7H17" fill="none" stroke="#25528e" stroke-width="1.1" stroke-dasharray="2.4 1.3"/><circle cx="24" cy="24.2" r="7.9" fill="#fff"/><circle cx="24" cy="24.2" r="6.9" fill="#2ca55f"/><path d="M19.3 24.2h9.4" stroke="#fff" stroke-width="2.3" fill="none"/><path d="M24 19.5v9.4" stroke="#fff" stroke-width="2.3" fill="none"/></svg><svg class="b" style="left:343px;top:54px;overflow:visible;" width="32" height="32" viewBox="0 0 32 32"><path d="M7.7 0.6H31.6V26.5H27.3V31.5H8.4V25.7H0.4V4.6H7.7Z" fill="#fff"/><path d="M7.7 0.6H31.6V26.5H27.3V31.5H8.4V25.7H0.4V4.6H7.7Z" fill="none" stroke="#25528e" stroke-width="1.2"/><path d="M7.7 4.6V10.3H20.6V0.6M0.4 16.5H16.9V22M22.3 17V13.6H31.6M8.4 25.7H13.4V31.5M13.4 25.7H17" fill="none" stroke="#25528e" stroke-width="1.1" stroke-dasharray="2.4 1.3"/><circle cx="24" cy="24.2" r="7.9" fill="#fff"/><circle cx="24" cy="24.2" r="6.9" fill="#cc1f2e"/><path d="M19.3 24.2h9.4" stroke="#fff" stroke-width="2.3" fill="none"/></svg><svg class="b" style="left:386px;top:54px;overflow:visible;" width="32" height="32" viewBox="0 0 32 32"><path d="M7.7 0.6H31.6V26.5H27.3V31.5H8.4V25.7H0.4V4.6H7.7Z" fill="#fff"/><path d="M7.7 0.6H31.6V26.5H27.3V31.5H8.4V25.7H0.4V4.6H7.7Z" fill="none" stroke="#25528e" stroke-width="1.2"/><path d="M7.7 4.6V10.3H20.6V0.6M0.4 16.5H16.9V22M22.3 17V13.6H31.6M8.4 25.7H13.4V31.5M13.4 25.7H17" fill="none" stroke="#25528e" stroke-width="1.1" stroke-dasharray="2.4 1.3"/><g transform="translate(19.2 17)"><path d="M0.3 0.3V12.2L3.2 9.6L5.4 14L7.6 13L5.5 8.7L9.4 8.5Z" fill="#fff" stroke="#25528e" stroke-width="1.1" stroke-linejoin="round"/></g></svg><svg class="b" style="left:441px;top:54px;overflow:visible;" width="32" height="32" viewBox="0 0 32 32"><path d="M7.7 0.6H31.6V26.5H27.3V31.5H8.4V25.7H0.4V4.6H7.7Z" fill="#fff"/><path d="M7.7 0.6H31.6V26.5H27.3V31.5H8.4V25.7H0.4V4.6H7.7Z" fill="none" stroke="#25528e" stroke-width="1.2"/><path d="M7.7 4.6V10.3H20.6V0.6M0.4 16.5H16.9V22M22.3 17V13.6H31.6M8.4 25.7H13.4V31.5M13.4 25.7H17" fill="none" stroke="#25528e" stroke-width="1.1" stroke-dasharray="2.4 1.3"/><g transform="translate(22.5 17)"><path d="M0.3 0.3V12.2L3.2 9.6L5.4 14L7.6 13L5.5 8.7L9.4 8.5Z" fill="#fff" stroke="#25528e" stroke-width="1.1" stroke-linejoin="round"/></g><circle cx="19" cy="19.4" r="2.7" fill="#cc1f2e"/><path d="M17.4 19.4h3.2" stroke="#fff" stroke-width="1"/></svg><svg class="b" style="left:500px;top:54px;overflow:visible;" width="32" height="32" viewBox="0 0 32 32"><path d="M1.5 11.5H30.5V25H26V19.3Q21 14.8 16 14.8Q11 14.8 6.3 19.3V25H1.5Z" fill="#fff" stroke="#25528e" stroke-width="1.2" stroke-linejoin="round"/><path d="M1.5 19.5Q3.5 17.5 6.3 16.5V25H1.5Z M13.3 15V25H19V15Z M26 16.6Q28.6 17.6 30.5 19.5V25H26Z" fill="#d5dae6" stroke="#25528e" stroke-width="1.1" stroke-linejoin="round"/><path d="M1.5 19.5Q16 9 30.5 19.5" fill="none" stroke="#25528e" stroke-width="1.1"/><rect x="0.6" y="8.1" width="30.8" height="3.4" fill="#fff" stroke="#25528e" stroke-width="1.2"/><circle cx="24" cy="24.2" r="7.9" fill="#fff"/><circle cx="24" cy="24.2" r="6.9" fill="#2ca55f"/><path d="M19.3 24.2h9.4" stroke="#fff" stroke-width="2.3" fill="none"/><path d="M24 19.5v9.4" stroke="#fff" stroke-width="2.3" fill="none"/></svg><svg class="b" style="left:541px;top:54px;overflow:visible;" width="32" height="32" viewBox="0 0 32 32"><path d="M1.5 11.5H30.5V25H26V19.3Q21 14.8 16 14.8Q11 14.8 6.3 19.3V25H1.5Z" fill="#fff" stroke="#25528e" stroke-width="1.2" stroke-linejoin="round"/><path d="M1.5 19.5Q3.5 17.5 6.3 16.5V25H1.5Z M13.3 15V25H19V15Z M26 16.6Q28.6 17.6 30.5 19.5V25H26Z" fill="#d5dae6" stroke="#25528e" stroke-width="1.1" stroke-linejoin="round"/><path d="M1.5 19.5Q16 9 30.5 19.5" fill="none" stroke="#25528e" stroke-width="1.1"/><rect x="0.6" y="8.1" width="30.8" height="3.4" fill="#fff" stroke="#25528e" stroke-width="1.2"/><circle cx="24" cy="24.2" r="7.9" fill="#fff"/><circle cx="24" cy="24.2" r="6.9" fill="#cc1f2e"/><path d="M19.3 24.2h9.4" stroke="#fff" stroke-width="2.3" fill="none"/></svg><svg class="b" style="left:584px;top:54px;overflow:visible;" width="32" height="32" viewBox="0 0 32 32"><path d="M1.5 11.5H30.5V25H26V19.3Q21 14.8 16 14.8Q11 14.8 6.3 19.3V25H1.5Z" fill="#fff" stroke="#25528e" stroke-width="1.2" stroke-linejoin="round"/><path d="M1.5 19.5Q3.5 17.5 6.3 16.5V25H1.5Z M13.3 15V25H19V15Z M26 16.6Q28.6 17.6 30.5 19.5V25H26Z" fill="#d5dae6" stroke="#25528e" stroke-width="1.1" stroke-linejoin="round"/><path d="M1.5 19.5Q16 9 30.5 19.5" fill="none" stroke="#25528e" stroke-width="1.1"/><rect x="0.6" y="8.1" width="30.8" height="3.4" fill="#fff" stroke="#25528e" stroke-width="1.2"/><g transform="translate(19.2 17.2)"><path d="M0.3 0.3V12.2L3.2 9.6L5.4 14L7.6 13L5.5 8.7L9.4 8.5Z" fill="#fff" stroke="#25528e" stroke-width="1.1" stroke-linejoin="round"/></g></svg><svg class="b" style="left:644px;top:54px;overflow:visible;" width="32" height="32" viewBox="0 0 32 32"><path d="M0.3 0.5L5.5 0.5L22.3 10.2V14.2L13 9.6L13.6 15L0.3 6.8Z" fill="#fff"/><path d="M0.3 0.6L13.8 9.5M5.5 0.5L22.3 10.2V15M10 0.5L22.3 8M0.3 6.8L13.4 15V9.8" fill="none" stroke="#25528e" stroke-width="1.1"/><path d="M2.5 0.6L5.5 0.5L22.3 10.2L22.5 16.5Q30 24.5 31 27.5Q31.5 31.4 19.5 31.4Q8.5 31.4 8.5 27.8Q8.6 26 11.5 23Q15.5 19 14.5 15.5L13.6 9.6Z" fill="#b5bbcc" stroke="#25528e" stroke-width="1.1" stroke-linejoin="round"/><path d="M14.5 16Q15.5 19 11.5 23Q8.6 26 8.6 27.8Q9 30.4 15.5 31Q13 28 14.5 24.5Q17 20 14.5 16Z" fill="#8f98b3"/></svg><svg class="b" style="left:699px;top:54px;overflow:visible;" width="32" height="32" viewBox="0 0 32 32"><path d="M0.3 0.5L5.5 0.5L22.3 10.2V14.2L13 9.6L13.6 15L0.3 6.8Z" fill="#fff"/><path d="M0.3 0.6L13.8 9.5M5.5 0.5L22.3 10.2V15M10 0.5L22.3 8M0.3 6.8L13.4 15V9.8" fill="none" stroke="#25528e" stroke-width="1.1"/><path d="M2.5 0.6L5.5 0.5L22.3 10.2L22.5 16.5Q30 24.5 31 27.5Q31.5 31.4 19.5 31.4Q8.5 31.4 8.5 27.8Q8.6 26 11.5 23Q15.5 19 14.5 15.5L13.6 9.6Z" fill="#b5bbcc" stroke="#25528e" stroke-width="1.1" stroke-linejoin="round"/><path d="M14.5 16Q15.5 19 11.5 23Q8.6 26 8.6 27.8Q9 30.4 15.5 31Q13 28 14.5 24.5Q17 20 14.5 16Z" fill="#8f98b3"/><circle cx="23.8" cy="23.6" r="7.6" fill="#f5f5f5"/><g transform="translate(23.8 23.6)"><path d="M0 -7C0.7 -2 2 -0.7 7 0C2 0.7 0.7 2 0 7C-0.7 2 -2 0.7 -7 0C-2 -0.7 -0.7 -2 0 -7Z" fill="#25528e"/><path d="M-5 -5L-3.4 -3.4M5 -5L3.4 -3.4M-5 5L-3.4 3.4M5 5L3.4 3.4" stroke="#25528e" stroke-width="1.1"/></g></svg><svg class="b" style="left:749px;top:54px;overflow:visible;" width="32" height="32" viewBox="0 0 32 32"><rect x="8.4" y="4.2" width="23.4" height="7.4" rx="2.5" fill="#c3c9d8" stroke="#25528e" stroke-width="1.1"/><path d="M9.6 4L11.2 11.8" stroke="#25528e" stroke-width="2.1" stroke-linecap="round"/><path d="M12.9429 4L14.5429 11.8" stroke="#25528e" stroke-width="2.1" stroke-linecap="round"/><path d="M16.2857 4L17.8857 11.8" stroke="#25528e" stroke-width="2.1" stroke-linecap="round"/><path d="M19.6286 4L21.2286 11.8" stroke="#25528e" stroke-width="2.1" stroke-linecap="round"/><path d="M22.9714 4L24.5714 11.8" stroke="#25528e" stroke-width="2.1" stroke-linecap="round"/><path d="M26.3143 4L27.9143 11.8" stroke="#25528e" stroke-width="2.1" stroke-linecap="round"/><path d="M29.6571 4L31.2571 11.8" stroke="#25528e" stroke-width="2.1" stroke-linecap="round"/><rect x="0.3" y="16.2" width="31.5" height="10.8" rx="2.5" fill="#c3c9d8" stroke="#25528e" stroke-width="1.1"/><path d="M1.5 16L3.1 27.2" stroke="#25528e" stroke-width="2.1" stroke-linecap="round"/><path d="M5.4375 16L7.0375 27.2" stroke="#25528e" stroke-width="2.1" stroke-linecap="round"/><path d="M9.375 16L10.975 27.2" stroke="#25528e" stroke-width="2.1" stroke-linecap="round"/><path d="M13.3125 16L14.9125 27.2" stroke="#25528e" stroke-width="2.1" stroke-linecap="round"/><path d="M17.25 16L18.85 27.2" stroke="#25528e" stroke-width="2.1" stroke-linecap="round"/><path d="M21.1875 16L22.7875 27.2" stroke="#25528e" stroke-width="2.1" stroke-linecap="round"/><path d="M25.125 16L26.725 27.2" stroke="#25528e" stroke-width="2.1" stroke-linecap="round"/><path d="M29.0625 16L30.6625 27.2" stroke="#25528e" stroke-width="2.1" stroke-linecap="round"/></svg><svg class="b" style="left:804px;top:54px;overflow:visible;" width="32" height="32" viewBox="0 0 32 32"><path d="M2.4 11V31.3H29.6V11L16 1.6Z" fill="#fff"/><path d="M2.4 10.6V31.3H29.6V10.6" fill="none" stroke="#25528e" stroke-width="1.3"/><path d="M0.6 11.3L16 0.9L31.4 11.3" fill="none" stroke="#25528e" stroke-width="2" stroke-linejoin="miter" stroke-linecap="round"/><rect x="5.7" y="13.6" width="4.8" height="8.5" fill="#dfe4ef" stroke="#25528e" stroke-width="1.1"/><rect x="21.5" y="13.6" width="4.8" height="8.5" fill="#dfe4ef" stroke="#25528e" stroke-width="1.1"/><path d="M5.7 19.6h4.8M21.5 19.6h4.8" stroke="#25528e" stroke-width="1"/><rect x="13.3" y="19.3" width="5.4" height="12" fill="#25528e"/><rect x="16.8" y="24" width="0.9" height="2.6" fill="#fff"/></svg><svg class="b" style="left:859px;top:54px;overflow:visible;" width="32" height="32" viewBox="0 0 32 32"><rect x="0.6" y="2.4" width="30.8" height="24.2" fill="#dfe4ef" stroke="#25528e" stroke-width="1.2"/><rect x="0.6" y="2.4" width="30.8" height="4.6" fill="#25528e"/><path d="M2.5 6.6L5 2.8H7.8L5.3 6.6Z M10 6.6L12.5 2.8H15.3L12.8 6.6Z M17.5 6.6L20 2.8H22.8L20.3 6.6Z M25 6.6L27.5 2.8H30.3L27.8 6.6Z" fill="#fff"/><path d="M10.3 10.6V22.4Q10.3 23.4 11.3 23L22.6 17.4Q23.5 16.7 22.6 16L11.3 10.1Q10.3 9.7 10.3 10.6Z" fill="#25528e"/><path d="M16.3 31.6L18.2 25.6L26.4 16.6L31.2 20.9L23 29.8Z" fill="#f5f5f5"/><path d="M17.3 30.9L18.8 26.4L26.5 18L29.9 21L22.2 29.4Z" fill="#25528e"/><path d="M19.6 26.2L26.4 18.8M21 27.4L27.8 20M22 28.4L28.8 21" stroke="#fff" stroke-width="0.7"/><path d="M18.6 26.8L21.9 29.7" stroke="#fff" stroke-width="0.9"/></svg><svg class="b" style="left:904px;top:54px;overflow:visible;" width="32" height="32" viewBox="0 0 32 32"><path d="M5 9H27" stroke="#25528e" stroke-width="1.6"/><rect x="0.9" y="6.5" width="4.6" height="4.8" fill="#fff" stroke="#8f9cc0" stroke-width="0.9"/><rect x="26.5" y="6.5" width="4.6" height="4.8" fill="#fff" stroke="#8f9cc0" stroke-width="0.9"/><rect x="0.7" y="15.2" width="30.6" height="10.4" fill="#ffd83f" stroke="#25528e" stroke-width="1.2"/><path d="M3.6 15.6v4.6" stroke="#25528e" stroke-width="1"/><path d="M7.8 15.6v3.2" stroke="#25528e" stroke-width="1"/><path d="M12 15.6v4.6" stroke="#25528e" stroke-width="1"/><path d="M16.2 15.6v3.2" stroke="#25528e" stroke-width="1"/><path d="M20.4 15.6v4.6" stroke="#25528e" stroke-width="1"/><path d="M24.6 15.6v3.2" stroke="#25528e" stroke-width="1"/><path d="M28.8 15.6v4.6" stroke="#25528e" stroke-width="1"/></svg><svg class="b" style="left:904px;top:93px;overflow:visible;" width="32" height="32" viewBox="0 0 32 32"><path d="M8.3 5.2V27.5Q8.3 31.2 16 31.2Q23.7 31.2 23.7 27.5V5.2Z" fill="#d8dde9" stroke="#25528e" stroke-width="1.2"/><ellipse cx="16" cy="5.2" rx="7.7" ry="4.4" fill="#e9ecf3" stroke="#25528e" stroke-width="1.2"/><ellipse cx="16" cy="5.4" rx="5" ry="2.7" fill="#b9bdc9" stroke="#25528e" stroke-width="0.9"/><rect x="0.7" y="15" width="30.6" height="10.4" fill="#ffd83f" stroke="#25528e" stroke-width="1.2"/><path d="M3.6 15.4v4.6" stroke="#25528e" stroke-width="1"/><path d="M7.8 15.4v3.2" stroke="#25528e" stroke-width="1"/><path d="M12 15.4v4.6" stroke="#25528e" stroke-width="1"/><path d="M16.2 15.4v3.2" stroke="#25528e" stroke-width="1"/><path d="M20.4 15.4v4.6" stroke="#25528e" stroke-width="1"/><path d="M24.6 15.4v3.2" stroke="#25528e" stroke-width="1"/><path d="M28.8 15.4v4.6" stroke="#25528e" stroke-width="1"/></svg><svg class="b" style="left:954px;top:54px;overflow:visible;" width="32" height="32" viewBox="0 0 32 32"><rect x="4.3" y="0.8" width="23.4" height="30.4" rx="2.6" fill="#fff" stroke="#25528e" stroke-width="1.3"/><rect x="7.3" y="3.6" width="17.4" height="7" rx="1" fill="#dfe4ef" stroke="#25528e" stroke-width="1.1"/><circle cx="8.6" cy="14.4" r="1.55" fill="#25528e"/><circle cx="13.6" cy="14.4" r="1.55" fill="#25528e"/><circle cx="18.6" cy="14.4" r="1.55" fill="#25528e"/><circle cx="23.6" cy="14.4" r="1.55" fill="#25528e"/><circle cx="8.6" cy="18.4" r="1.55" fill="#25528e"/><circle cx="13.6" cy="18.4" r="1.55" fill="#25528e"/><circle cx="18.6" cy="18.4" r="1.55" fill="#25528e"/><circle cx="23.6" cy="18.4" r="1.55" fill="#25528e"/><circle cx="8.6" cy="22.4" r="1.55" fill="#25528e"/><circle cx="13.6" cy="22.4" r="1.55" fill="#25528e"/><circle cx="18.6" cy="22.4" r="1.55" fill="#25528e"/><circle cx="8.6" cy="26.4" r="1.55" fill="#25528e"/><circle cx="13.6" cy="26.4" r="1.55" fill="#25528e"/><circle cx="18.6" cy="26.4" r="1.55" fill="#25528e"/><rect x="22.1" y="20.9" width="3.1" height="7" rx="1.5" fill="#25528e"/></svg><svg class="b" style="left:1012px;top:54px;overflow:visible;" width="32" height="32" viewBox="0 0 32 32"><circle cx="16" cy="15.7" r="15.4" fill="#cc1f2e"/><path d="M9.2 8.9L22.8 22.5M22.8 8.9L9.2 22.5" stroke="#fff" stroke-width="3.7" stroke-linecap="round"/></svg><svg class="b" style="left:1810px;top:54px;overflow:visible;" width="32" height="32" viewBox="0 0 32 32"><path d="M27.2 10.2A12.7 12.7 0 1 0 28.4 17.6" fill="none" stroke="#222" stroke-width="1.5"/><path d="M29.6 5.2L29.4 12.6L22.6 12.2Z" fill="#222"/><ellipse cx="18.80" cy="13.10" rx="4.22" ry="3.23" transform="rotate(-45 18.80 13.10)" fill="none" stroke="#de2a30" stroke-width="2.1"/><ellipse cx="12.60" cy="13.10" rx="4.22" ry="3.23" transform="rotate(45 12.60 13.10)" fill="none" stroke="#12b0dd" stroke-width="2.1"/><ellipse cx="12.60" cy="19.30" rx="4.22" ry="3.23" transform="rotate(-45 12.60 19.30)" fill="none" stroke="#f3a71c" stroke-width="2.1"/><ellipse cx="18.80" cy="19.30" rx="4.22" ry="3.23" transform="rotate(45 18.80 19.30)" fill="none" stroke="#5ab846" stroke-width="2.1"/><ellipse cx="18.80" cy="13.10" rx="4.22" ry="3.23" transform="rotate(-45 18.80 13.10)" fill="none" stroke="#de2a30" stroke-width="2.1" pathLength="100" stroke-dasharray="30 70" stroke-dashoffset="-8"/></svg><svg class="b" style="left:1868px;top:54px;overflow:visible;" width="32" height="32" viewBox="0 0 32 32"><ellipse cx="20.20" cy="13.70" rx="5.89" ry="4.51" transform="rotate(-45 20.20 13.70)" fill="none" stroke="#de2a30" stroke-width="3"/><ellipse cx="11.40" cy="13.70" rx="5.89" ry="4.51" transform="rotate(45 11.40 13.70)" fill="none" stroke="#12b0dd" stroke-width="3"/><ellipse cx="11.40" cy="22.50" rx="5.89" ry="4.51" transform="rotate(-45 11.40 22.50)" fill="none" stroke="#f3a71c" stroke-width="3"/><ellipse cx="20.20" cy="22.50" rx="5.89" ry="4.51" transform="rotate(45 20.20 22.50)" fill="none" stroke="#5ab846" stroke-width="3"/><ellipse cx="20.20" cy="13.70" rx="5.89" ry="4.51" transform="rotate(-45 20.20 13.70)" fill="none" stroke="#de2a30" stroke-width="3" pathLength="100" stroke-dasharray="30 70" stroke-dashoffset="-8"/><path d="M20.4 12Q21 5 29 5.6" fill="none" stroke="#f5f5f5" stroke-width="5.4"/><path d="M20.6 12.4Q21.4 5.4 28.6 5.6" fill="none" stroke="#222" stroke-width="3.2"/><path d="M28 0.6L33.6 5.6L28 10.4Z" fill="#222"/></svg>
<svg class="b" style="left:3px;top:4px;" width="40" height="40" viewBox="0 0 40 40"><defs><linearGradient id="ag" x1="0" y1="0" x2="0" y2="1"><stop offset="0" stop-color="#4cb889"/><stop offset="0.5" stop-color="#1fa56c"/><stop offset="1" stop-color="#0b9d5e"/></linearGradient></defs><rect x="0" y="0" width="40" height="40" rx="2.5" fill="url(#ag)"/><path d="M14.2 6L16.6 6L17.6 30.6H13.4Z" fill="#b9952b" stroke="#6d5a1c" stroke-width="0.5"/><path d="M6.4 11.6L15.4 9.6L31.6 12.6V14L15.4 12.8L6.4 14Z" fill="#c29d30" stroke="#6d5a1c" stroke-width="0.5"/><path d="M15.4 4.6L6.8 11.6M15.4 4.6L31.4 12.4" stroke="#3a3a2a" stroke-width="0.7" fill="none"/><circle cx="15.4" cy="5" r="1.1" fill="#e08a1a"/><path d="M14 9V30M15.4 9V30M16.8 9V30" stroke="#6d5a1c" stroke-width="0.4"/><path d="M31 13.6V17.6" stroke="#222" stroke-width="0.6"/><rect x="29.8" y="17.4" width="2.6" height="3" fill="#333"/><rect x="7" y="13.8" width="2.8" height="1.8" fill="#333"/><path d="M11.4 31.6L14.6 29.4L16 31.8Z" fill="#222"/><path d="M14.6 31.2Q17 33.6 24 34.2Q31.4 34.4 32.6 30.6Q33 29.4 30.8 28.6Q31.4 20.2 25.2 19.4Q18.4 19.2 17.2 27.6Q15 29.4 14.6 31.2Z" fill="#fafafa" stroke="#9a9a9a" stroke-width="0.5"/><path d="M17.2 27.8Q23 31.6 30.8 28.6M22 19.8Q20.4 24 21 29.4M25.4 19.4Q24.6 24.6 25.6 30M28.4 20.6Q28.6 25 29.2 29.2" fill="none" stroke="#8a8a8a" stroke-width="0.7"/></svg>
<svg class="b" style="left:52px;top:6px;overflow:visible;" width="14" height="14" viewBox="0 0 14 14"><path d="M0.5 0.5H12.5L13.5 1.5V13.5H0.5Z" fill="#000"/><rect x="1.8" y="1" width="10.2" height="6.2" fill="#fff"/><rect x="1.6" y="7.6" width="11" height="1.8" fill="#8a8a00"/><path d="M1.6 1V9H3V1ZM11 1V9H12.6V1Z" fill="#8a8a00"/><rect x="9" y="10.4" width="2" height="2.6" fill="#fff"/><rect x="3.4" y="10" width="5" height="3.5" fill="#000"/></svg><svg class="b" style="left:77px;top:5px;overflow:visible;" width="16" height="16" viewBox="0 0 16 16"><path d="M6.6 1.2L1.6 6L6.6 10.8" fill="none" stroke="#3b3b3b" stroke-width="2.1"/><path d="M1.8 6H10Q15.4 6.6 15 11.4Q14.6 13.4 13 14.6" fill="none" stroke="#3b3b3b" stroke-width="2.1"/></svg><svg class="b" style="left:103px;top:5px;overflow:visible;" width="16" height="16" viewBox="0 0 16 16"><path d="M9.4 1.2L14.4 6L9.4 10.8" fill="none" stroke="#a8a8a8" stroke-width="2.1"/><path d="M14.2 6H6Q0.6 6.6 1 11.4Q1.4 13.4 3 14.6" fill="none" stroke="#a8a8a8" stroke-width="2.1"/></svg><svg class="b" style="left:129px;top:5px;overflow:visible;" width="16" height="16" viewBox="0 0 16 16"><circle cx="6" cy="6" r="4.6" fill="none" stroke="#3b3b3b" stroke-width="2"/><path d="M9.4 9.4L15.2 15.2" stroke="#3b3b3b" stroke-width="2.3"/></svg><svg class="b" style="left:155px;top:5px;overflow:visible;" width="16" height="16" viewBox="0 0 16 16"><path d="M5 6L8.6 1.2L14.4 2.6L11 7.6Z" fill="#fff" stroke="#000" stroke-width="0.9"/><path d="M0.8 8.2L6.4 5.6L15.2 8.2V11.6L8.6 14.8L0.8 11.8Z" fill="#d8d8d8" stroke="#000" stroke-width="1"/><path d="M0.8 8.2L8.6 11L15.2 8.2M8.6 11V14.8" fill="none" stroke="#000" stroke-width="0.8"/><path d="M8.6 11L15.2 8.2V11.6L8.6 14.8Z" fill="#8a8a8a"/><path d="M1.2 12.8L8.6 15.8L15 12.6" fill="none" stroke="#000" stroke-width="1"/><rect x="4.2" y="7" width="1.6" height="1" fill="#00d000"/><rect x="6.4" y="7.8" width="1.8" height="1" fill="#f00000"/></svg><svg class="b" style="left:181px;top:5px;overflow:visible;" width="16" height="16" viewBox="0 0 16 16"><path d="M0.8 3.6L4.6 1.4L15 6.2V10.4L12.4 11.6V14.6L10.8 15.2V12.2L8.4 13.2V15.4L6.6 14.8L2 12.6L0.8 9Z" fill="#fff" stroke="#000" stroke-width="1.1" stroke-linejoin="round"/><path d="M10.8 8.4L15 6.4V10.2L10.8 12Z" fill="#555"/><rect x="12.6" y="7.2" width="1.2" height="0.9" fill="#00c000"/><rect x="13.8" y="6.7" width="1" height="0.9" fill="#e00000"/></svg><svg class="b" style="left:206px;top:5px;overflow:visible;" width="16" height="16" viewBox="0 0 16 16"><rect x="0.8" y="1.6" width="9.8" height="12.8" fill="#fff" stroke="#000" stroke-width="1.3"/><path d="M3 4H8.6M3 6.4H8.6M3 8.8H8.6M3 11.2H8.6" stroke="#d8d8d8" stroke-width="1.6"/><path d="M5.8 3V12.4" stroke="#fff" stroke-width="0.8"/><path d="M7 8.6L11.4 3.6" stroke="#f00" stroke-width="2.4"/><path d="M9 0.4H15V6.2Z" fill="#f00"/></svg><svg class="b" style="left:222px;top:12px;overflow:visible;" width="5" height="4" viewBox="0 0 5 4"><path d="M0.6 0.6H4.4L2.5 2.8Z" fill="#9a9a9a"/></svg><div class="b" style="left:230px;top:1px;width:1px;height:24px;background:#b0b0b0;"></div><svg class="b" style="left:240px;top:5px;overflow:visible;" width="16" height="16" viewBox="0 0 16 16"><path d="M12.6 4.4A6.6 6.6 0 1 0 13.2 9.2" fill="none" stroke="#555" stroke-width="0.9"/><path d="M14 1.6L13.8 5.6L10.2 5.2Z" fill="#444"/><ellipse cx="8.90" cy="6.30" rx="2.18" ry="1.67" transform="rotate(-45 8.90 6.30)" fill="none" stroke="#de2a30" stroke-width="1.1"/><ellipse cx="5.50" cy="6.30" rx="2.18" ry="1.67" transform="rotate(45 5.50 6.30)" fill="none" stroke="#12b0dd" stroke-width="1.1"/><ellipse cx="5.50" cy="9.70" rx="2.18" ry="1.67" transform="rotate(-45 5.50 9.70)" fill="none" stroke="#f3a71c" stroke-width="1.1"/><ellipse cx="8.90" cy="9.70" rx="2.18" ry="1.67" transform="rotate(45 8.90 9.70)" fill="none" stroke="#5ab846" stroke-width="1.1"/><ellipse cx="8.90" cy="6.30" rx="2.18" ry="1.67" transform="rotate(-45 8.90 6.30)" fill="none" stroke="#de2a30" stroke-width="1.1" pathLength="100" stroke-dasharray="30 70" stroke-dashoffset="-8"/></svg><svg class="b" style="left:264px;top:5px;overflow:visible;" width="16" height="16" viewBox="0 0 16 16"><ellipse cx="8.50" cy="6.90" rx="3.20" ry="2.45" transform="rotate(-45 8.50 6.90)" fill="none" stroke="#de2a30" stroke-width="1.6"/><ellipse cx="3.50" cy="6.90" rx="3.20" ry="2.45" transform="rotate(45 3.50 6.90)" fill="none" stroke="#12b0dd" stroke-width="1.6"/><ellipse cx="3.50" cy="11.90" rx="3.20" ry="2.45" transform="rotate(-45 3.50 11.90)" fill="none" stroke="#f3a71c" stroke-width="1.6"/><ellipse cx="8.50" cy="11.90" rx="3.20" ry="2.45" transform="rotate(45 8.50 11.90)" fill="none" stroke="#5ab846" stroke-width="1.6"/><ellipse cx="8.50" cy="6.90" rx="3.20" ry="2.45" transform="rotate(-45 8.50 6.90)" fill="none" stroke="#de2a30" stroke-width="1.6" pathLength="100" stroke-dasharray="30 70" stroke-dashoffset="-8"/><path d="M8.6 6Q9 2.4 12.6 2.6" fill="none" stroke="#333" stroke-width="1.7"/><path d="M11.8 0.2L15 2.8L11.8 5.4Z" fill="#333"/></svg><svg class="b" style="left:289px;top:7px;overflow:visible;" width="14" height="12" viewBox="0 0 14 12"><rect x="0.8" y="1" width="12.4" height="1.6" fill="#000"/><path d="M1.2 5H12.8L7 10.6Z" fill="#000"/></svg>
<svg class="b" style="left:1600px;top:4px;overflow:visible;" width="18" height="18" viewBox="0 0 18 18"><circle cx="8.6" cy="5.2" r="4" fill="#eaf1f8" stroke="#c5d6e8" stroke-width="0.6"/><path d="M1 15.6Q1 9.6 8.6 9.6Q16 9.6 16.2 15.6Z" fill="#dfe8f2"/><circle cx="12" cy="12.4" r="3.8" fill="#3fae49" stroke="#cfe6cf" stroke-width="0.7"/><path d="M10.2 12.4L11.6 13.8L14 11" fill="none" stroke="#fff" stroke-width="1.1"/></svg><svg class="b" style="left:1651px;top:4px;overflow:visible;" width="18" height="18" viewBox="0 0 18 18"><path d="M2 4.4L9 1L16 4.4V11.6L9 15.4L2 11.6Z" fill="#f3f6fa"/><path d="M2 4.4L9 7.8V15.4L2 11.6Z" fill="#d4dde8"/><path d="M9 7.8L16 4.4V11.6L9 15.4Z" fill="#bfcbdb"/><circle cx="13" cy="12.6" r="3.8" fill="#3fae49" stroke="#cfe6cf" stroke-width="0.7"/><path d="M11.2 12.6L12.6 14L15 11.2" fill="none" stroke="#fff" stroke-width="1.1"/></svg><div class="b" style="left:1795px;top:13px;width:10px;height:1px;background:#fff;"></div><svg class="b" style="left:1842px;top:7px;overflow:visible;" width="11" height="11" viewBox="0 0 11 11"><rect x="0.5" y="2.5" width="8" height="8" fill="none" stroke="#fff" stroke-width="1"/><path d="M2.5 2.5V0.5H10.5V8.5H8.5" fill="none" stroke="#fff" stroke-width="1"/></svg><svg class="b" style="left:1891px;top:8px;overflow:visible;" width="11" height="11" viewBox="0 0 11 11"><path d="M0.4 0.4L10.6 10.6M10.6 0.4L0.4 10.6" stroke="#fff" stroke-width="1.3"/></svg>
<svg class="b" style="left:1266px;top:30px;overflow:visible;" width="16" height="16" viewBox="0 0 16 16"><ellipse cx="8.6" cy="6.6" rx="4.6" ry="5.4" fill="#fff" stroke="#222" stroke-width="1" transform="rotate(20 8.6 6.6)"/><path d="M11.4 10.6L15.6 15" stroke="#000" stroke-width="1.9"/><path d="M12.6 2Q8 0.4 4.6 5.4L3.2 12" fill="none" stroke="#1030f0" stroke-width="1.9"/><path d="M0 10.4L6.4 11.4L3 16Z" fill="#1030f0"/><path d="M9 1Q13.6 0.8 14.6 5.6" fill="none" stroke="#1030f0" stroke-width="1.3"/></svg><svg class="b" style="left:1292px;top:30px;overflow:visible;" width="16" height="16" viewBox="0 0 16 16"><circle cx="7" cy="7" r="5.6" fill="#fff" stroke="#222" stroke-width="1"/><path d="M11 11L15.4 15.4" stroke="#000" stroke-width="2"/><path d="M7 1.8V12.2M1.8 7H12.2" stroke="#1030f0" stroke-width="1.1"/><path d="M7 1L5.2 3.6H8.8ZM7 13L5.2 10.4H8.8ZM1 7L3.6 5.2V8.8ZM13 7L10.4 5.2V8.8Z" fill="#1030f0"/></svg><svg class="b" style="left:1318px;top:30px;overflow:visible;" width="16" height="16" viewBox="0 0 16 16"><circle cx="7" cy="7" r="5.6" fill="#fff" stroke="#222" stroke-width="1"/><path d="M11 11L15.4 15.4" stroke="#000" stroke-width="2"/><text x="2.2" y="9.8" font-size="7.8" font-weight="700" fill="#1030f0" font-family="'Liberation Sans',sans-serif">×2</text></svg><svg class="b" style="left:1344px;top:30px;overflow:visible;" width="16" height="16" viewBox="0 0 16 16"><path d="M12.8 5.4A5.4 5.4 0 1 0 9 12.4" fill="none" stroke="#1030f0" stroke-width="1.5"/><path d="M8.6 0L15 3.4L9.6 7Z" fill="#1030f0"/><path d="M0.4 15.2H8" stroke="#000" stroke-width="1"/><path d="M6.4 14.6L8 11.2L13 7L15.4 9.4L10.4 13.8Z" fill="#f2e01a" stroke="#000" stroke-width="0.8"/><path d="M12.6 7.2L14 6L15.8 7.8L15.2 9.2Z" fill="#e01a1a"/></svg><svg class="b" style="left:1370px;top:30px;overflow:visible;" width="16" height="16" viewBox="0 0 16 16"><circle cx="9" cy="5.4" r="4.8" fill="#d9ebf0" stroke="#444" stroke-width="1"/><path d="M12.4 9L15.6 12.6" stroke="#000" stroke-width="1.9"/><path d="M0.6 5.6H9.4V15.4H0.6Z" fill="none" stroke="#1030f0" stroke-width="1" stroke-dasharray="1.2 1.2"/><path d="M0.6 5.6H9.4V10" fill="none" stroke="#1030f0" stroke-width="1"/></svg><svg class="b" style="left:1396px;top:30px;overflow:visible;" width="16" height="16" viewBox="0 0 16 16"><path d="M3.6 9.4L1.6 7.6Q0.6 7.2 0.6 8.4L4 14.2Q5 15.6 7 15.6H10.4Q12.4 15.2 12.8 13L13.6 5.2Q13.4 4 12.2 4.4L11.6 8V2.6Q11 1.4 10 2.4L9.6 7.6V1.4Q8.8 0.2 7.8 1.4L7.6 7.6L6.8 2.6Q6 1.6 5.2 2.8L5.4 10.6Z" fill="#fff" stroke="#222" stroke-width="0.9" stroke-linejoin="round"/></svg><svg class="b" style="left:1422px;top:30px;overflow:visible;" width="16" height="16" viewBox="0 0 16 16"><path d="M8 0.8Q11.4 3.6 10.6 6.4Q14.6 6 15.2 8Q14.6 10 10.6 9.6Q11.4 12.4 8 15.2Q4.6 12.4 5.4 9.6Q1.4 10 0.8 8Q1.4 6 5.4 6.4Q4.6 3.6 8 0.8Z" fill="none" stroke="#333" stroke-width="1"/><path d="M9.6 4L11 5.6L9 6M6.4 12L5 10.4L7 10" fill="none" stroke="#222" stroke-width="0.9"/></svg><svg class="b" style="left:1448px;top:30px;overflow:visible;" width="16" height="16" viewBox="0 0 16 16"><rect x="0.6" y="0.6" width="13" height="10" fill="#fff" stroke="#333" stroke-width="1"/><rect x="0.6" y="0.6" width="13" height="2.6" fill="#30d8e8"/><rect x="6.6" y="6" width="8.8" height="9.4" fill="#fff" stroke="#333" stroke-width="1"/><path d="M2.6 6.6Q7 5 10.6 10.6" fill="none" stroke="#1040e0" stroke-width="1.6"/><path d="M12.4 13L8.4 12L11.8 8.6Z" fill="#1040e0"/></svg><svg class="b" style="left:1483px;top:30px;overflow:visible;" width="16" height="16" viewBox="0 0 16 16"><path d="M0.6 1.6H13L15.4 4V15.4H0.6Z" fill="#fff" stroke="#222" stroke-width="0.9"/><text x="1.4" y="8" font-size="6.2" font-family="'Liberation Sans',sans-serif" font-weight="700" fill="#000" textLength="13" lengthAdjust="spacingAndGlyphs">DXF</text><text x="1.4" y="14" font-size="6.2" font-family="'Liberation Sans',sans-serif" font-weight="700" fill="#000" textLength="13" lengthAdjust="spacingAndGlyphs">DWG</text></svg><svg class="b" style="left:1509px;top:30px;overflow:visible;" width="16" height="16" viewBox="0 0 16 16"><text x="0" y="5.6" font-size="6.4" font-family="'Liberation Sans',sans-serif" font-weight="700" fill="#8a0000" textLength="11" lengthAdjust="spacingAndGlyphs">DXF</text><text x="0" y="15.8" font-size="6.4" font-family="'Liberation Sans',sans-serif" font-weight="700" fill="#8a0000" textLength="11" lengthAdjust="spacingAndGlyphs">DWG</text><path d="M11.6 0.6H16V15.6H11.6Z" fill="#333"/><path d="M11.6 3H16M11.6 5.6H16M11.6 8.2H16M11.6 10.8H16M11.6 13.4H16" stroke="#ddd" stroke-width="0.8"/><path d="M1.4 9.8L5 6.4H12V9.8Z" fill="#fff" stroke="#555" stroke-width="0.7"/><path d="M4.6 8.2H9.4M8 6.8L9.6 8.2L8 9.6" fill="none" stroke="#e00000" stroke-width="1"/></svg><svg class="b" style="left:1536px;top:30px;overflow:visible;" width="14" height="16" viewBox="0 0 14 16"><path d="M1.6 15V7.2Q1.6 1.2 7 1.2Q12.4 1.2 12.4 7.2V15H8.6V7.4Q8.6 5 7 5Q5.4 5 5.4 7.4V15Z" fill="#e80000" stroke="#000" stroke-width="1.1"/><rect x="2" y="12" width="3" height="2.6" fill="#fff"/><rect x="9" y="12" width="3" height="2.6" fill="#fff"/></svg><svg class="b" style="left:1572px;top:32px;overflow:visible;" width="12" height="12" viewBox="0 0 12 12"><rect x="1" y="1" width="10" height="10" fill="none" stroke="#333" stroke-width="2"/></svg><svg class="b" style="left:1596px;top:30px;overflow:visible;" width="16" height="16" viewBox="0 0 16 16"><path d="M5 0.4V15.6M11 0.4V15.6M0.4 5H15.6M0.4 11H15.6" stroke="#555" stroke-width="1"/></svg><svg class="b" style="left:1622px;top:30px;overflow:visible;" width="16" height="16" viewBox="0 0 16 16"><rect x="4.6" y="4.6" width="6.8" height="6.8" fill="none" stroke="#444" stroke-width="1"/><rect x="7.4" y="7.4" width="1.2" height="1.2" fill="#444"/><rect x="0.6" y="0.8" width="1.1" height="1.1" fill="#555"/><rect x="0.6" y="14" width="1.1" height="1.1" fill="#555"/><rect x="7.4" y="0.8" width="1.1" height="1.1" fill="#555"/><rect x="7.4" y="14" width="1.1" height="1.1" fill="#555"/><rect x="14.2" y="0.8" width="1.1" height="1.1" fill="#555"/><rect x="14.2" y="14" width="1.1" height="1.1" fill="#555"/><rect x="0.6" y="7.4" width="1.1" height="1.1" fill="#555"/><rect x="14.2" y="7.4" width="1.1" height="1.1" fill="#555"/></svg><svg class="b" style="left:1648px;top:30px;overflow:visible;" width="16" height="16" viewBox="0 0 16 16"><rect x="0.5" y="3.6" width="15.4" height="9" rx="1" fill="#444"/><rect x="1.8" y="5" width="1.1" height="1.1" fill="#eee"/><rect x="3.9" y="5" width="1.1" height="1.1" fill="#eee"/><rect x="6" y="5" width="1.1" height="1.1" fill="#eee"/><rect x="8.1" y="5" width="1.1" height="1.1" fill="#eee"/><rect x="10.2" y="5" width="1.1" height="1.1" fill="#eee"/><rect x="12.3" y="5" width="1.1" height="1.1" fill="#eee"/><rect x="2.3" y="7" width="1.1" height="1.1" fill="#eee"/><rect x="4.4" y="7" width="1.1" height="1.1" fill="#eee"/><rect x="6.5" y="7" width="1.1" height="1.1" fill="#eee"/><rect x="8.6" y="7" width="1.1" height="1.1" fill="#eee"/><rect x="10.7" y="7" width="1.1" height="1.1" fill="#eee"/><rect x="12.8" y="7" width="1.1" height="1.1" fill="#eee"/><rect x="1.8" y="9" width="1.1" height="1.1" fill="#eee"/><rect x="3.9" y="9" width="1.1" height="1.1" fill="#eee"/><rect x="6" y="9" width="1.1" height="1.1" fill="#eee"/><rect x="8.1" y="9" width="1.1" height="1.1" fill="#eee"/><rect x="10.2" y="9" width="1.1" height="1.1" fill="#eee"/><rect x="12.3" y="9" width="1.1" height="1.1" fill="#eee"/><rect x="4" y="10.6" width="8" height="1" fill="#eee"/></svg><svg class="b" style="left:1674px;top:30px;overflow:visible;" width="16" height="16" viewBox="0 0 16 16"><rect x="0.6" y="0.8" width="14.8" height="8.6" fill="#fff" stroke="#444" stroke-width="1"/><text x="1.8" y="7.8" font-size="7" fill="#333" font-family="'Liberation Sans',sans-serif" textLength="12.4" lengthAdjust="spacingAndGlyphs">1.00</text><path d="M0.6 13.2H15.4M0.6 11.4V15M15.4 11.4V15" stroke="#444" stroke-width="1"/></svg><svg class="b" style="left:1700px;top:30px;overflow:visible;" width="16" height="16" viewBox="0 0 16 16"><path d="M4.4 0.6V13.4M0.6 13.4H15.4" stroke="#444" stroke-width="1.2"/><path d="M4.6 6.4Q11.6 6.6 12.6 13.4" fill="none" stroke="#444" stroke-width="1"/><circle cx="7.4" cy="10.6" r="0.9" fill="#444"/></svg><svg class="b" style="left:1726px;top:30px;overflow:visible;" width="16" height="16" viewBox="0 0 16 16"><circle cx="7" cy="8.6" r="6" fill="none" stroke="#555" stroke-width="1.1"/><path d="M7 8.6H15M7 8.6L12.4 1.6" stroke="#555" stroke-width="1"/></svg><svg class="b" style="left:1753px;top:30px;overflow:visible;" width="15" height="16" viewBox="0 0 15 16"><rect x="1" y="4.6" width="12.6" height="10.6" fill="none" stroke="#222" stroke-width="1.1" stroke-dasharray="1.2 1.2"/><rect x="0.6" y="0.6" width="2.2" height="2.2" fill="none" stroke="#444" stroke-width="0.9"/><rect x="11.4" y="1.2" width="3" height="2" fill="none" stroke="#444" stroke-width="0.9"/><path d="M4.4 1.8H9.6" stroke="#444" stroke-width="0.9"/><rect x="3.6" y="7.4" width="2.4" height="2.4" fill="none" stroke="#e8742a" stroke-width="1"/><rect x="9.4" y="10.6" width="2.4" height="2.4" fill="none" stroke="#e8742a" stroke-width="1"/><path d="M7.4 8.6H10.6V10" fill="none" stroke="#e8742a" stroke-width="1"/></svg><svg class="b" style="left:1778px;top:31px;overflow:visible;" width="15" height="14" viewBox="0 0 15 14"><path d="M0.8 0.8H14.2V9.6H5.2L1.4 12.6V9.6H0.8Z" fill="#eef2f5" stroke="#444" stroke-width="1.2" stroke-linejoin="round"/></svg><svg class="b" style="left:1804px;top:30px;overflow:visible;" width="16" height="16" viewBox="0 0 16 16"><path d="M2.2 1L4.2 1L5.2 4.2L12.6 12.4Q13.8 14 12.6 14.8Q11.4 15.4 10.4 14L3.8 5.4L1 4.6Z" fill="#3a3a3a"/><path d="M14.6 0.8L15.4 1.6L12 6.4L10.6 6.8L4.6 13.8Q4.8 15.4 3 15.6L1.2 15.2L2.6 13.6L2.2 12.4L0.8 13.6Q0.4 11.6 2 11.2L3.4 11.6L9.4 5.4L9.8 4Z" fill="#3a3a3a"/></svg><svg class="b" style="left:1837px;top:30px;overflow:visible;" width="16" height="16" viewBox="0 0 16 16"><rect x="0.7" y="0.7" width="4" height="14.6" fill="#fff" stroke="#000" stroke-width="1.3"/><rect x="6.8" y="0.7" width="8.6" height="7.4" fill="#fff" stroke="#000" stroke-width="1.3"/><rect x="6.8" y="10.4" width="8.6" height="4.9" fill="#fff" stroke="#000" stroke-width="1.3"/></svg><svg class="b" style="left:1872px;top:30px;overflow:visible;" width="16" height="16" viewBox="0 0 16 16"><defs><radialGradient id="gl" cx="0.35" cy="0.3" r="0.8"><stop offset="0" stop-color="#9fd0ff"/><stop offset="0.45" stop-color="#1f6fe8"/><stop offset="1" stop-color="#0a2a9c"/></radialGradient></defs><circle cx="8" cy="8" r="7.8" fill="url(#gl)"/><path d="M4 3Q7 2 8 4Q9.6 5.6 7.6 7.4Q6 8.6 6.6 11Q5 12 4.2 9.6Q2 8 2.6 5.4Z M10.4 6.6Q13 6 13.6 8.6Q13 11.6 11 12.4Q10 10.6 10.8 9Z" fill="#fff" opacity="0.9"/></svg><svg class="b" style="left:1898px;top:30px;overflow:visible;" width="16" height="16" viewBox="0 0 16 16"><path d="M0.8 9.6L10.6 1L15.4 4.6L6.4 14.2Z" fill="#7a1fa0" stroke="#3a0a55" stroke-width="0.7"/><path d="M0.8 9.6L6.4 14.2V16L0.8 11.6Z" fill="#4a0f6a"/><path d="M6.4 14.2L15.4 4.6V6.6L6.4 16Z" fill="#f2f2f2" stroke="#555" stroke-width="0.5"/><text x="6" y="10.4" font-size="7.5" font-weight="700" fill="#ffe000" font-family="'Liberation Sans',sans-serif" transform="rotate(-8 8 8)">?</text></svg><svg class="b" style="left:1856px;top:38px;overflow:visible;" width="4" height="3" viewBox="0 0 4 3"><path d="M0.2 0.4H3.8L2 2.6Z" fill="#8a8a8a"/></svg><svg class="b" style="left:1890px;top:38px;overflow:visible;" width="4" height="3" viewBox="0 0 4 3"><path d="M0.2 0.4H3.8L2 2.6Z" fill="#8a8a8a"/></svg><svg class="b" style="left:1916px;top:38px;overflow:visible;" width="4" height="3" viewBox="0 0 4 3"><path d="M0.2 0.4H3.8L2 2.6Z" fill="#8a8a8a"/></svg>
<svg class="b" style="left:253px;top:151px;overflow:visible;" width="11" height="8" viewBox="0 0 11 8"><path d="M0.8 1L5.25 5.6L9.7 1" fill="none" stroke="#000" stroke-width="2.3"/></svg><svg class="b" style="left:253px;top:427px;overflow:visible;" width="11" height="8" viewBox="0 0 11 8"><path d="M0.8 1L5.25 5.6L9.7 1" fill="none" stroke="#000" stroke-width="2.3"/></svg><svg class="b" style="left:253px;top:638px;overflow:visible;" width="11" height="8" viewBox="0 0 11 8"><path d="M0.8 1L5.25 5.6L9.7 1" fill="none" stroke="#000" stroke-width="2.3"/></svg><svg class="b" style="left:1885px;top:151px;overflow:visible;" width="11" height="8" viewBox="0 0 11 8"><path d="M0.8 1L5.25 5.6L9.7 1" fill="none" stroke="#000" stroke-width="2.3"/></svg><svg class="b" style="left:1885px;top:593px;overflow:visible;" width="11" height="8" viewBox="0 0 11 8"><path d="M0.8 1L5.25 5.6L9.7 1" fill="none" stroke="#000" stroke-width="2.3"/></svg><svg class="b" style="left:273.2px;top:150px;overflow:visible;" width="10" height="10" viewBox="0 0 10 10"><path d="M0.4 0.4L9.4 9.4M9.4 0.4L0.4 9.4" fill="none" stroke="#000" stroke-width="1.5"/></svg><svg class="b" style="left:273.2px;top:426px;overflow:visible;" width="10" height="10" viewBox="0 0 10 10"><path d="M0.4 0.4L9.4 9.4M9.4 0.4L0.4 9.4" fill="none" stroke="#000" stroke-width="1.5"/></svg><svg class="b" style="left:273.2px;top:637px;overflow:visible;" width="10" height="10" viewBox="0 0 10 10"><path d="M0.4 0.4L9.4 9.4M9.4 0.4L0.4 9.4" fill="none" stroke="#000" stroke-width="1.5"/></svg><svg class="b" style="left:1905.2px;top:150px;overflow:visible;" width="10" height="10" viewBox="0 0 10 10"><path d="M0.4 0.4L9.4 9.4M9.4 0.4L0.4 9.4" fill="none" stroke="#000" stroke-width="1.5"/></svg><svg class="b" style="left:1905.2px;top:592px;overflow:visible;" width="10" height="10" viewBox="0 0 10 10"><path d="M0.4 0.4L9.4 9.4M9.4 0.4L0.4 9.4" fill="none" stroke="#000" stroke-width="1.5"/></svg>
<svg class="b" style="left:4px;top:169px;overflow:visible;" width="16" height="16" viewBox="0 0 16 16"><path d="M3.6 7.4L8 5.2L12.4 7.4V12L8 14.4L3.6 12Z" fill="#eef1f6" stroke="#7f98bd" stroke-width="0.8"/><path d="M3.6 7.4L8 9.6L12.4 7.4M8 9.6V14.4" fill="none" stroke="#7f98bd" stroke-width="0.8"/><path d="M8 9.6L12.4 7.4V12L8 14.4Z" fill="#b4c2d8"/><path d="M1.4 6.4V4.6H3.2M1.4 13.2V15H3.2M14.6 13.2V15H12.8" fill="none" stroke="#9fb1cd" stroke-width="0.8"/><path d="M12.8 1V5.4M10.6 3.2H15" stroke="#25528e" stroke-width="1.2"/></svg><svg class="b" style="left:29px;top:169px;overflow:visible;" width="16" height="16" viewBox="0 0 16 16"><path d="M3.6 7.4L8 5.2L12.4 7.4V12L8 14.4L3.6 12Z" fill="#eef1f6" stroke="#7f98bd" stroke-width="0.8"/><path d="M3.6 7.4L8 9.6L12.4 7.4M8 9.6V14.4" fill="none" stroke="#7f98bd" stroke-width="0.8"/><path d="M8 9.6L12.4 7.4V12L8 14.4Z" fill="#b4c2d8"/><path d="M1.4 6.4V4.6H3.2M1.4 13.2V15H3.2M14.6 13.2V15H12.8" fill="none" stroke="#9fb1cd" stroke-width="0.8"/><path d="M8 8.6L12.4 2.6L14 3.8L9.6 9.8Z" fill="#3f669c"/><path d="M7.6 9.2L7.2 11L9 10.2Z" fill="#25528e"/></svg><svg class="b" style="left:54px;top:169px;overflow:visible;" width="16" height="16" viewBox="0 0 16 16"><path d="M3.6 7.4L8 5.2L12.4 7.4V12L8 14.4L3.6 12Z" fill="#eef1f6" stroke="#7f98bd" stroke-width="0.8"/><path d="M3.6 7.4L8 9.6L12.4 7.4M8 9.6V14.4" fill="none" stroke="#7f98bd" stroke-width="0.8"/><path d="M8 9.6L12.4 7.4V12L8 14.4Z" fill="#b4c2d8"/><path d="M1.4 6.4V4.6H3.2M1.4 13.2V15H3.2M14.6 13.2V15H12.8" fill="none" stroke="#9fb1cd" stroke-width="0.8"/><path d="M7.6 0.8H12L14.6 3.4V9.4H7.6Z" fill="#fff" stroke="#5d7eae" stroke-width="0.9"/></svg><svg class="b" style="left:79px;top:169px;overflow:visible;" width="16" height="16" viewBox="0 0 16 16"><path d="M3.6 7.4L8 5.2L12.4 7.4V12L8 14.4L3.6 12Z" fill="#eef1f6" stroke="#7f98bd" stroke-width="0.8"/><path d="M3.6 7.4L8 9.6L12.4 7.4M8 9.6V14.4" fill="none" stroke="#7f98bd" stroke-width="0.8"/><path d="M8 9.6L12.4 7.4V12L8 14.4Z" fill="#b4c2d8"/><path d="M1.4 6.4V4.6H3.2M1.4 13.2V15H3.2M14.6 13.2V15H12.8" fill="none" stroke="#9fb1cd" stroke-width="0.8"/><path d="M11 0.6L15 4.6M15 0.6L11 4.6" stroke="#f00000" stroke-width="1.3"/></svg><svg class="b" style="left:104px;top:169px;overflow:visible;" width="16" height="16" viewBox="0 0 16 16"><path d="M3.4 4Q8 -0.4 12.6 4Q8 8.4 3.4 4Z" fill="#fff" stroke="#25528e" stroke-width="0.9"/><circle cx="8" cy="4" r="1.7" fill="#25528e"/><path d="M8 9.4L12.4 13.6H3.6Z" fill="#b9c6da" stroke="#5d7eae" stroke-width="0.8"/><path d="M0.8 14.6H15.2" stroke="#25528e" stroke-width="1"/></svg><div class="b" style="left:128px;top:167px;width:1px;height:21px;background:#b4b4b4;"></div><svg class="b" style="left:137px;top:169px;overflow:visible;" width="16" height="16" viewBox="0 0 16 16"><rect x="1.2" y="5" width="13.6" height="8.8" rx="1.4" fill="#f2f4f8" stroke="#7f98bd" stroke-width="0.9"/><path d="M5.2 5L6.2 3.4H9.8L10.8 5" fill="#f2f4f8" stroke="#7f98bd" stroke-width="0.9"/><circle cx="8.6" cy="9.4" r="3" fill="none" stroke="#7f98bd" stroke-width="0.9"/><circle cx="8.6" cy="9.4" r="1.5" fill="none" stroke="#a9b9d2" stroke-width="0.7"/><path d="M3.4 6.8V12" stroke="#7f98bd" stroke-width="0.8"/></svg><svg class="b" style="left:162px;top:169px;overflow:visible;" width="16" height="16" viewBox="0 0 16 16"><rect x="1.2" y="5" width="13.6" height="8.8" rx="1.4" fill="#f2f4f8" stroke="#7f98bd" stroke-width="0.9"/><path d="M5.2 5L6.2 3.4H9.8L10.8 5" fill="#f2f4f8" stroke="#7f98bd" stroke-width="0.9"/><circle cx="8.6" cy="9.4" r="3" fill="none" stroke="#7f98bd" stroke-width="0.9"/><circle cx="8.6" cy="9.4" r="1.5" fill="none" stroke="#a9b9d2" stroke-width="0.7"/><path d="M3.4 6.8V12" stroke="#7f98bd" stroke-width="0.8"/><g transform="translate(-0.6 10.4)"><path d="M0.2 5.6Q1 2 4.2 2V0.4L7 3L4.2 5.4V3.8Q2 3.8 0.2 5.6Z" fill="#25528e"/></g></svg><div class="b" style="left:186px;top:167px;width:1px;height:21px;background:#b4b4b4;"></div><svg class="b" style="left:195px;top:169px;overflow:visible;" width="16" height="16" viewBox="0 0 16 16"><path d="M1.2 3L7 5.6V14.8L1.2 12.2Z" fill="#b4c2d8" stroke="#7f98bd" stroke-width="0.8"/><path d="M7 5.6L11 4L14.8 5.8V12L7 14.8Z" fill="#fff" stroke="#9fb1cd" stroke-width="0.8"/><path d="M7 14.8L14.8 12V8.4L7 11.2Z" fill="#e6eaf1"/><path d="M3 4.4V13M5 5.2V13.8" stroke="#8ea4c6" stroke-width="0.6"/></svg><svg class="b" style="left:220px;top:169px;overflow:visible;" width="16" height="16" viewBox="0 0 16 16"><path d="M1.2 3L7 5.6V14.8L1.2 12.2Z" fill="#b4c2d8" stroke="#7f98bd" stroke-width="0.8"/><path d="M7 5.6L11 4L14.8 5.8V12L7 14.8Z" fill="#fff" stroke="#9fb1cd" stroke-width="0.8"/><path d="M7 14.8L14.8 12V8.4L7 11.2Z" fill="#e6eaf1"/><path d="M3 4.4V13M5 5.2V13.8" stroke="#8ea4c6" stroke-width="0.6"/><g transform="translate(-0.6 10.4)"><path d="M0.2 5.6Q1 2 4.2 2V0.4L7 3L4.2 5.4V3.8Q2 3.8 0.2 5.6Z" fill="#25528e"/></g></svg><svg class="b" style="left:7.7px;top:196px;overflow:visible;" width="12" height="8" viewBox="0 0 12 8"><path d="M0.6 1L5.6 6L10.6 1" fill="none" stroke="#3c3c3c" stroke-width="2"/></svg><svg class="b" style="left:7.7px;top:356px;overflow:visible;" width="12" height="8" viewBox="0 0 12 8"><path d="M0.6 1L5.6 6L10.6 1" fill="none" stroke="#3c3c3c" stroke-width="2"/></svg>
<div class="b" style="left:0px;top:441px;width:14px;height:24px;background:#fcfcfc;border:1px solid #b8b8b8;box-sizing:border-box;"></div><div class="b" style="left:274px;top:441px;width:14px;height:24px;background:#fcfcfc;border:1px solid #b8b8b8;box-sizing:border-box;"></div><svg class="b" style="left:4px;top:449px;overflow:visible;" width="5" height="9" viewBox="0 0 5 9"><path d="M4.6 0.4V8.6L0.4 4.5Z" fill="#444"/></svg><svg class="b" style="left:279px;top:449px;overflow:visible;" width="5" height="9" viewBox="0 0 5 9"><path d="M0.4 0.4V8.6L4.6 4.5Z" fill="#000"/></svg><svg class="b" style="left:20px;top:445px;overflow:visible;" width="16" height="16" viewBox="0 0 16 16"><rect x="4.6" y="0.6" width="8.8" height="11" fill="#eef1f6" stroke="#6f8ab5" stroke-width="0.9"/><path d="M6.8 2.6h1.6M10 2.6h1.6M6.8 5.2h1.6M10 5.2h1.6" stroke="#25528e" stroke-width="1.5"/><path d="M2 8.6V14" stroke="#3fae60" stroke-width="2"/><path d="M0.8 10L2 8L3.2 10" fill="none" stroke="#3fae60" stroke-width="0.9"/><circle cx="10.6" cy="10.8" r="4.2" fill="#fff" stroke="#25528e" stroke-width="1.3"/><path d="M10.6 8.4V13.2M8.2 10.8H13" stroke="#25528e" stroke-width="1.4"/></svg><svg class="b" style="left:44px;top:445px;overflow:visible;" width="16" height="16" viewBox="0 0 16 16"><path d="M1 4L7.6 1L14.2 4L7.6 7Z" fill="#fff" stroke="#6f8ab5" stroke-width="0.9"/><path d="M1 6.8L7.6 9.8L14.2 6.8M1 9.6L7.6 12.6L10 11.6" fill="none" stroke="#6f8ab5" stroke-width="0.9"/><g transform="translate(1 0.4)"><circle cx="10.6" cy="10.8" r="4.2" fill="#fff" stroke="#25528e" stroke-width="1.3"/><path d="M10.6 8.4V13.2M8.2 10.8H13" stroke="#25528e" stroke-width="1.4"/></g></svg><svg class="b" style="left:69px;top:445px;overflow:visible;" width="16" height="16" viewBox="0 0 16 16"><path d="M2.4 13.8L3.6 9.8L10.6 1.6Q11.8 0.6 13.2 1.8Q14.4 3 13.4 4.2L6.4 12.4Z" fill="#4f8fd8" stroke="#2e62a8" stroke-width="0.8"/><path d="M2.4 13.8L3.6 9.8L6.4 12.4Z" fill="#25528e"/><path d="M10.2 2.2L13 4.6" stroke="#e8f0fa" stroke-width="1.2"/></svg><svg class="b" style="left:94px;top:445px;overflow:visible;" width="16" height="16" viewBox="0 0 16 16"><path d="M2 2L14 14M14 2L2 14" stroke="#c9c9c9" stroke-width="2.6"/></svg><svg class="b" style="left:119px;top:445px;overflow:visible;" width="16" height="16" viewBox="0 0 16 16"><path d="M8 3.6L15 11.4H1Z" fill="#a3a3a3"/></svg><svg class="b" style="left:144px;top:445px;overflow:visible;" width="16" height="16" viewBox="0 0 16 16"><path d="M8 11.4L15 3.6H1Z" fill="#a3a3a3"/></svg><div class="b" style="left:167px;top:443px;width:1px;height:21px;background:#b4b4b4;"></div><svg class="b" style="left:176px;top:445px;overflow:visible;" width="16" height="16" viewBox="0 0 16 16"><path d="M7.4 8.4L12.6 2.2" stroke="#22508f" stroke-width="2.5" stroke-linecap="round" fill="none"/><path d="M2.6 5.4Q1.4 9.6 4 13Q7 15.8 10.6 13.6Q13.6 11.2 13.4 8.2L11.6 6.6L9.4 9L6 5.6Z" fill="#22508f"/><path d="M10.2 9.6L11.6 11M8.6 11L10 12.6" stroke="#f0f0f0" stroke-width="0.7" fill="none"/></svg><svg class="b" style="left:201px;top:445px;overflow:visible;" width="16" height="16" viewBox="0 0 16 16"><path d="M7.4 8.4L12.6 2.2" stroke="#e8484a" stroke-width="2.5" stroke-linecap="round" fill="none"/><path d="M2.6 5.4Q1.4 9.6 4 13Q7 15.8 10.6 13.6Q13.6 11.2 13.4 8.2L11.6 6.6L9.4 9L6 5.6Z" fill="#e8484a"/><path d="M10.2 9.6L11.6 11M8.6 11L10 12.6" stroke="#f0f0f0" stroke-width="0.7" fill="none"/></svg><svg class="b" style="left:226px;top:445px;overflow:visible;" width="16" height="16" viewBox="0 0 16 16"><circle cx="8" cy="2.6" r="1.7" fill="none" stroke="#25528e" stroke-width="1.2"/><rect x="6.3" y="5.8" width="3.4" height="9.4" rx="1.5" fill="none" stroke="#25528e" stroke-width="1.2"/></svg><div class="b" style="left:250px;top:443px;width:1px;height:21px;background:#b4b4b4;"></div><svg class="b" style="left:258px;top:445px;overflow:visible;" width="14" height="16" viewBox="0 0 14 16"><path d="M1 14.6L11 4.6" stroke="#25528e" stroke-width="1.5"/><path d="M12.6 0.4V5.6M10 3H15.2M10.8 1.2L14.4 4.8M14.4 1.2L10.8 4.8" stroke="#6f8ab5" stroke-width="0.7"/></svg><svg class="b" style="left:7.7px;top:472px;overflow:visible;" width="12" height="8" viewBox="0 0 12 8"><path d="M0.6 1L5.6 6L10.6 1" fill="none" stroke="#3c3c3c" stroke-width="2"/></svg><svg class="b" style="left:249px;top:467px;overflow:visible;" width="16" height="16" viewBox="0 0 16 16"><path d="M0.6 8Q8 1.4 15.4 8Q8 14.6 0.6 8Z" fill="#fff" stroke="#3f669c" stroke-width="0.9"/><circle cx="8" cy="8" r="3.3" fill="none" stroke="#3f669c" stroke-width="1"/><circle cx="8.6" cy="7.6" r="1.6" fill="none" stroke="#3f669c" stroke-width="0.9"/></svg><svg class="b" style="left:249px;top:487px;overflow:visible;" width="16" height="16" viewBox="0 0 16 16"><path d="M0.6 8Q8 1.4 15.4 8Q8 14.6 0.6 8Z" fill="#fff" stroke="#3f669c" stroke-width="0.9"/><circle cx="8" cy="8" r="3.3" fill="none" stroke="#3f669c" stroke-width="1"/><circle cx="8.6" cy="7.6" r="1.6" fill="none" stroke="#3f669c" stroke-width="0.9"/></svg><svg class="b" style="left:249px;top:507px;overflow:visible;" width="16" height="16" viewBox="0 0 16 16"><path d="M0.6 8Q8 1.4 15.4 8Q8 14.6 0.6 8Z" fill="#fff" stroke="#3f669c" stroke-width="0.9"/><circle cx="8" cy="8" r="3.3" fill="none" stroke="#3f669c" stroke-width="1"/><circle cx="8.6" cy="7.6" r="1.6" fill="none" stroke="#3f669c" stroke-width="0.9"/></svg><svg class="b" style="left:249px;top:527px;overflow:visible;" width="16" height="16" viewBox="0 0 16 16"><path d="M0.6 8Q8 1.4 15.4 8Q8 14.6 0.6 8Z" fill="#fff" stroke="#3f669c" stroke-width="0.9"/><circle cx="8" cy="8" r="3.3" fill="none" stroke="#3f669c" stroke-width="1"/><circle cx="8.6" cy="7.6" r="1.6" fill="none" stroke="#3f669c" stroke-width="0.9"/></svg><svg class="b" style="left:249px;top:547px;overflow:visible;" width="16" height="16" viewBox="0 0 16 16"><path d="M0.6 8Q8 1.4 15.4 8Q8 14.6 0.6 8Z" fill="#fff" stroke="#3f669c" stroke-width="0.9"/><circle cx="8" cy="8" r="3.3" fill="none" stroke="#3f669c" stroke-width="1"/><circle cx="8.6" cy="7.6" r="1.6" fill="none" stroke="#3f669c" stroke-width="0.9"/></svg><svg class="b" style="left:249px;top:567px;overflow:visible;" width="16" height="16" viewBox="0 0 16 16"><path d="M0.6 8Q8 1.4 15.4 8Q8 14.6 0.6 8Z" fill="#fff" stroke="#3f669c" stroke-width="0.9"/><circle cx="8" cy="8" r="3.3" fill="none" stroke="#3f669c" stroke-width="1"/><circle cx="8.6" cy="7.6" r="1.6" fill="none" stroke="#3f669c" stroke-width="0.9"/></svg><svg class="b" style="left:249px;top:587px;overflow:visible;" width="16" height="16" viewBox="0 0 16 16"><path d="M0.6 8Q8 1.4 15.4 8Q8 14.6 0.6 8Z" fill="#fff" stroke="#3f669c" stroke-width="0.9"/><circle cx="8" cy="8" r="3.3" fill="none" stroke="#3f669c" stroke-width="1"/><circle cx="8.6" cy="7.6" r="1.6" fill="none" stroke="#3f669c" stroke-width="0.9"/></svg><svg class="b" style="left:249px;top:607px;overflow:visible;" width="16" height="16" viewBox="0 0 16 16"><path d="M0.6 8Q8 1.4 15.4 8Q8 14.6 0.6 8Z" fill="#fff" stroke="#3f669c" stroke-width="0.9"/><circle cx="8" cy="8" r="3.3" fill="none" stroke="#3f669c" stroke-width="1"/><circle cx="8.6" cy="7.6" r="1.6" fill="none" stroke="#3f669c" stroke-width="0.9"/></svg><div class="b" style="left:0px;top:624px;width:288px;height:8px;background:#f0f0f0;"></div><div class="b" style="left:137px;top:627px;width:2px;height:2px;background:#b0b0b0;"></div><div class="b" style="left:141px;top:627px;width:2px;height:2px;background:#b0b0b0;"></div><div class="b" style="left:145px;top:627px;width:2px;height:2px;background:#b0b0b0;"></div><div class="b" style="left:149px;top:627px;width:2px;height:2px;background:#b0b0b0;"></div>
<svg class="b" style="left:4px;top:656px;overflow:visible;" width="16" height="16" viewBox="0 0 16 16"><rect x="0.6" y="0.6" width="3.4" height="3.4" fill="none" stroke="#25528e" stroke-width="1"/><rect x="0.6" y="6.3" width="3.4" height="3.4" fill="none" stroke="#25528e" stroke-width="1"/><rect x="0.6" y="12" width="3.4" height="3.4" fill="none" stroke="#25528e" stroke-width="1"/><path d="M4.4 8H10" stroke="#25528e" stroke-width="1"/><path d="M8 6.2L10.6 8L8 9.8Z" fill="#25528e"/><rect x="11.4" y="0.6" width="3.6" height="3.4" fill="none" stroke="#9fb1cd" stroke-width="0.8" stroke-dasharray="1 1"/><rect x="11.4" y="6.3" width="3.6" height="3.4" fill="#dfe4ef" stroke="#5d7eae" stroke-width="0.9"/><rect x="11.4" y="12" width="3.6" height="3.4" fill="none" stroke="#9fb1cd" stroke-width="0.8" stroke-dasharray="1 1"/></svg><svg class="b" style="left:29px;top:656px;overflow:visible;" width="16" height="16" viewBox="0 0 16 16"><rect x="0.7" y="0.7" width="6" height="14.6" rx="0.8" fill="#dfe4ef" stroke="#25528e" stroke-width="1.1"/><rect x="9.6" y="0.7" width="6" height="14.6" fill="none" stroke="#8fa5c6" stroke-width="0.9" stroke-dasharray="1.4 1.2"/><path d="M4 8H12" stroke="#25528e" stroke-width="1"/><path d="M10.6 6.2L13.2 8L10.6 9.8Z" fill="#25528e"/></svg><svg class="b" style="left:54px;top:656px;overflow:visible;" width="16" height="16" viewBox="0 0 16 16"><rect x="0.7" y="0.7" width="6" height="14.6" fill="none" stroke="#8fa5c6" stroke-width="0.9" stroke-dasharray="1.4 1.2"/><rect x="9.3" y="0.7" width="6" height="14.6" rx="0.8" fill="#dfe4ef" stroke="#25528e" stroke-width="1.1"/><path d="M3.4 8H11.4" stroke="#25528e" stroke-width="1"/><path d="M10.4 6.2L13 8L10.4 9.8Z" fill="#25528e"/></svg><svg class="b" style="left:79px;top:656px;overflow:visible;" width="16" height="16" viewBox="0 0 16 16"><path d="M1 4.4L7 1.2L13 4.4V11L7 14.4L1 11Z" fill="#fff" stroke="#7f98bd" stroke-width="0.9"/><path d="M1 4.4L7 7.6L13 4.4M7 7.6V14.4" fill="none" stroke="#7f98bd" stroke-width="0.8"/><path d="M5.6 12Q10 7.8 15 12Q10 16 5.6 12Z" fill="#fff" stroke="#25528e" stroke-width="0.9"/><circle cx="10.2" cy="12" r="1.7" fill="#25528e"/></svg><svg class="b" style="left:104px;top:656px;overflow:visible;" width="16" height="16" viewBox="0 0 16 16"><circle cx="8" cy="2.6" r="1.7" fill="none" stroke="#25528e" stroke-width="1.2"/><rect x="6.3" y="5.8" width="3.4" height="9.4" rx="1.5" fill="none" stroke="#25528e" stroke-width="1.2"/></svg><svg class="b" style="left:10px;top:680.5px;overflow:visible;" width="8" height="11" viewBox="0 0 8 11"><path d="M1 0.8L5.6 5.25L1 9.7" fill="none" stroke="#666" stroke-width="1.8"/></svg><svg class="b" style="left:7.7px;top:703px;overflow:visible;" width="12" height="8" viewBox="0 0 12 8"><path d="M0.6 1L5.6 6L10.6 1" fill="none" stroke="#3c3c3c" stroke-width="2"/></svg><svg class="b" style="left:26px;top:678px;overflow:visible;" width="14" height="16" viewBox="0 0 14 16"><path d="M5.6 3.6L9.6 1.4L13 3.2V8L9 10.2L5.6 8.4Z" fill="#fff" stroke="#25528e" stroke-width="1"/><path d="M5.6 3.6L9.2 5.4L13 3.4M9.2 5.4V10" fill="none" stroke="#25528e" stroke-width="0.9"/><path d="M1 9.6L4.8 7.8L8.4 9.8V13L4.6 15.2L1 13.2Z" fill="#dfe4ef" stroke="#25528e" stroke-width="1"/><path d="M1 9.6L4.6 11.6L8.4 9.8M4.6 11.6V15" fill="none" stroke="#25528e" stroke-width="0.9"/></svg><svg class="b" style="left:25px;top:698px;overflow:visible;" width="16" height="16" viewBox="0 0 16 16"><circle cx="8" cy="2.6" r="1.9" fill="#25528e"/><path d="M8 4.4V8.4M2.4 11V8.4H13.6V11" fill="none" stroke="#25528e" stroke-width="1.1"/><circle cx="2.4" cy="12.8" r="1.8" fill="#fff" stroke="#25528e" stroke-width="1"/><circle cx="8" cy="12.8" r="1.8" fill="#fff" stroke="#25528e" stroke-width="1"/><circle cx="13.6" cy="12.8" r="1.8" fill="#fff" stroke="#25528e" stroke-width="1"/></svg><svg class="b" style="left:210.4px;top:678px;overflow:visible;" width="16" height="16" viewBox="0 0 16 16"><path d="M0.6 8Q8 1.4 15.4 8Q8 14.6 0.6 8Z" fill="#fff" stroke="#3f669c" stroke-width="0.9"/><circle cx="8" cy="8" r="3.3" fill="none" stroke="#3f669c" stroke-width="1"/><circle cx="8.6" cy="7.6" r="1.6" fill="none" stroke="#3f669c" stroke-width="0.9"/></svg><svg class="b" style="left:238px;top:678px;overflow:visible;" width="16" height="16" viewBox="0 0 16 16"><path d="M8 0.5L15 4.2V11.8L8 15.5L1 11.8V4.2Z" fill="#3d6499" stroke="#25528e" stroke-width="1"/><path d="M8 0.8L14.6 4.3L8 8L1.4 4.3Z" fill="#7f9cc4"/><path d="M8 8V15.2L14.6 11.7V4.4Z" fill="#2b5691"/><path d="M4.8 6.2L8 4.6L11.2 6.2V10L8 11.8L4.8 10Z" fill="#fff"/><path d="M8 8V11.6L11 10V6.4Z" fill="#d5dcea"/><path d="M1.2 8L4.8 8.2M14.8 8L11.2 8.2M8 0.8V4.6M8 11.8V15.2M4.6 2.6L11.4 6M11.4 2.6L4.6 6M4.6 13.4V10M11.4 13.4V10" stroke="#a9bad4" stroke-width="0.6" fill="none"/></svg><svg class="b" style="left:267.2px;top:677.6px;overflow:visible;" width="14" height="16" viewBox="0 0 14 16"><path d="M3.4 7.2V4.4Q3.4 1 6.8 1Q10.2 1 10.2 4.4V5" fill="none" stroke="#5f7fb0" stroke-width="1.2"/><rect x="0.6" y="7" width="12.4" height="8.2" rx="1" fill="#8b97ad"/><rect x="6" y="9.6" width="1.7" height="3.4" fill="#e8ecf2"/></svg><svg class="b" style="left:210.4px;top:698px;overflow:visible;" width="16" height="16" viewBox="0 0 16 16"><path d="M0.6 8Q8 1.4 15.4 8Q8 14.6 0.6 8Z" fill="#fff" stroke="#3f669c" stroke-width="0.9"/><circle cx="8" cy="8" r="3.3" fill="none" stroke="#3f669c" stroke-width="1"/><circle cx="8.6" cy="7.6" r="1.6" fill="none" stroke="#3f669c" stroke-width="0.9"/></svg><svg class="b" style="left:238px;top:698px;overflow:visible;" width="16" height="16" viewBox="0 0 16 16"><path d="M8 0.5L15 4.2V11.8L8 15.5L1 11.8V4.2Z" fill="#3d6499" stroke="#25528e" stroke-width="1"/><path d="M8 0.8L14.6 4.3L8 8L1.4 4.3Z" fill="#7f9cc4"/><path d="M8 8V15.2L14.6 11.7V4.4Z" fill="#2b5691"/><path d="M4.8 6.2L8 4.6L11.2 6.2V10L8 11.8L4.8 10Z" fill="#fff"/><path d="M8 8V11.6L11 10V6.4Z" fill="#d5dcea"/><path d="M1.2 8L4.8 8.2M14.8 8L11.2 8.2M8 0.8V4.6M8 11.8V15.2M4.6 2.6L11.4 6M11.4 2.6L4.6 6M4.6 13.4V10M11.4 13.4V10" stroke="#a9bad4" stroke-width="0.6" fill="none"/></svg><svg class="b" style="left:267.2px;top:697.6px;overflow:visible;" width="14" height="16" viewBox="0 0 14 16"><path d="M3.4 7.2V4.4Q3.4 1 6.8 1Q10.2 1 10.2 4.4V5" fill="none" stroke="#5f7fb0" stroke-width="1.2"/><rect x="0.6" y="7" width="12.4" height="8.2" rx="1" fill="#8b97ad"/><rect x="6" y="9.6" width="1.7" height="3.4" fill="#e8ecf2"/></svg><svg class="b" style="left:210.4px;top:718px;overflow:visible;" width="16" height="16" viewBox="0 0 16 16"><path d="M0.6 8Q8 1.4 15.4 8Q8 14.6 0.6 8Z" fill="#fff" stroke="#3f669c" stroke-width="0.9"/><circle cx="8" cy="8" r="3.3" fill="none" stroke="#3f669c" stroke-width="1"/><circle cx="8.6" cy="7.6" r="1.6" fill="none" stroke="#3f669c" stroke-width="0.9"/></svg><svg class="b" style="left:238px;top:718px;overflow:visible;" width="16" height="16" viewBox="0 0 16 16"><path d="M8 0.5L15 4.2V11.8L8 15.5L1 11.8V4.2Z" fill="#3d6499" stroke="#25528e" stroke-width="1"/><path d="M8 0.8L14.6 4.3L8 8L1.4 4.3Z" fill="#7f9cc4"/><path d="M8 8V15.2L14.6 11.7V4.4Z" fill="#2b5691"/><path d="M4.8 6.2L8 4.6L11.2 6.2V10L8 11.8L4.8 10Z" fill="#fff"/><path d="M8 8V11.6L11 10V6.4Z" fill="#d5dcea"/><path d="M1.2 8L4.8 8.2M14.8 8L11.2 8.2M8 0.8V4.6M8 11.8V15.2M4.6 2.6L11.4 6M11.4 2.6L4.6 6M4.6 13.4V10M11.4 13.4V10" stroke="#a9bad4" stroke-width="0.6" fill="none"/></svg><svg class="b" style="left:267.2px;top:717.6px;overflow:visible;" width="14" height="16" viewBox="0 0 14 16"><path d="M3.4 7.2V4.4Q3.4 1 6.8 1Q10.2 1 10.2 4.4V5" fill="none" stroke="#5f7fb0" stroke-width="1.2"/><rect x="0.6" y="7" width="12.4" height="8.2" rx="1" fill="#8b97ad"/><rect x="6" y="9.6" width="1.7" height="3.4" fill="#e8ecf2"/></svg><svg class="b" style="left:210.4px;top:738px;overflow:visible;" width="16" height="16" viewBox="0 0 16 16"><path d="M0.6 8Q8 1.5 15.4 8Q8 14.5 0.6 8Z" fill="none" stroke="#a9a9a9" stroke-width="1"/><circle cx="8" cy="8" r="3.2" fill="none" stroke="#a9a9a9" stroke-width="1"/><path d="M1.5 1.2L14.8 14.6" stroke="#8a8a8a" stroke-width="1.2"/></svg><svg class="b" style="left:238px;top:738px;overflow:visible;" width="16" height="16" viewBox="0 0 16 16"><path d="M8 0.5L15 4.2V11.8L8 15.5L1 11.8V4.2Z" fill="#3d6499" stroke="#25528e" stroke-width="1"/><path d="M8 0.8L14.6 4.3L8 8L1.4 4.3Z" fill="#7f9cc4"/><path d="M8 8V15.2L14.6 11.7V4.4Z" fill="#2b5691"/><path d="M4.8 6.2L8 4.6L11.2 6.2V10L8 11.8L4.8 10Z" fill="#fff"/><path d="M8 8V11.6L11 10V6.4Z" fill="#d5dcea"/><path d="M1.2 8L4.8 8.2M14.8 8L11.2 8.2M8 0.8V4.6M8 11.8V15.2M4.6 2.6L11.4 6M11.4 2.6L4.6 6M4.6 13.4V10M11.4 13.4V10" stroke="#a9bad4" stroke-width="0.6" fill="none"/></svg><svg class="b" style="left:267.2px;top:737.6px;overflow:visible;" width="14" height="16" viewBox="0 0 14 16"><path d="M3.2 7.2V4.6Q3.2 1 6.8 1Q10.4 1 10.4 4.6V7.2" fill="none" stroke="#c6c6c6" stroke-width="1.2"/><rect x="0.8" y="7.2" width="12" height="8" rx="1" fill="#f4f4f4" stroke="#c6c6c6" stroke-width="1"/><circle cx="6.8" cy="11.2" r="1.6" fill="none" stroke="#cfcfcf" stroke-width="0.9"/></svg><svg class="b" style="left:210.4px;top:758px;overflow:visible;" width="16" height="16" viewBox="0 0 16 16"><path d="M0.6 8Q8 1.5 15.4 8Q8 14.5 0.6 8Z" fill="none" stroke="#a9a9a9" stroke-width="1"/><circle cx="8" cy="8" r="3.2" fill="none" stroke="#a9a9a9" stroke-width="1"/><path d="M1.5 1.2L14.8 14.6" stroke="#8a8a8a" stroke-width="1.2"/></svg><svg class="b" style="left:238px;top:758px;overflow:visible;" width="16" height="16" viewBox="0 0 16 16"><path d="M8 0.5L15 4.2V11.8L8 15.5L1 11.8V4.2Z" fill="#3d6499" stroke="#25528e" stroke-width="1"/><path d="M8 0.8L14.6 4.3L8 8L1.4 4.3Z" fill="#7f9cc4"/><path d="M8 8V15.2L14.6 11.7V4.4Z" fill="#2b5691"/><path d="M4.8 6.2L8 4.6L11.2 6.2V10L8 11.8L4.8 10Z" fill="#fff"/><path d="M8 8V11.6L11 10V6.4Z" fill="#d5dcea"/><path d="M1.2 8L4.8 8.2M14.8 8L11.2 8.2M8 0.8V4.6M8 11.8V15.2M4.6 2.6L11.4 6M11.4 2.6L4.6 6M4.6 13.4V10M11.4 13.4V10" stroke="#a9bad4" stroke-width="0.6" fill="none"/></svg><svg class="b" style="left:267.2px;top:757.6px;overflow:visible;" width="14" height="16" viewBox="0 0 14 16"><path d="M3.2 7.2V4.6Q3.2 1 6.8 1Q10.4 1 10.4 4.6V7.2" fill="none" stroke="#c6c6c6" stroke-width="1.2"/><rect x="0.8" y="7.2" width="12" height="8" rx="1" fill="#f4f4f4" stroke="#c6c6c6" stroke-width="1"/><circle cx="6.8" cy="11.2" r="1.6" fill="none" stroke="#cfcfcf" stroke-width="0.9"/></svg><svg class="b" style="left:210.4px;top:778px;overflow:visible;" width="16" height="16" viewBox="0 0 16 16"><path d="M0.6 8Q8 1.5 15.4 8Q8 14.5 0.6 8Z" fill="none" stroke="#a9a9a9" stroke-width="1"/><circle cx="8" cy="8" r="3.2" fill="none" stroke="#a9a9a9" stroke-width="1"/><path d="M1.5 1.2L14.8 14.6" stroke="#8a8a8a" stroke-width="1.2"/></svg><svg class="b" style="left:238px;top:778px;overflow:visible;" width="16" height="16" viewBox="0 0 16 16"><path d="M8 0.5L15 4.2V11.8L8 15.5L1 11.8V4.2Z" fill="#3d6499" stroke="#25528e" stroke-width="1"/><path d="M8 0.8L14.6 4.3L8 8L1.4 4.3Z" fill="#7f9cc4"/><path d="M8 8V15.2L14.6 11.7V4.4Z" fill="#2b5691"/><path d="M4.8 6.2L8 4.6L11.2 6.2V10L8 11.8L4.8 10Z" fill="#fff"/><path d="M8 8V11.6L11 10V6.4Z" fill="#d5dcea"/><path d="M1.2 8L4.8 8.2M14.8 8L11.2 8.2M8 0.8V4.6M8 11.8V15.2M4.6 2.6L11.4 6M11.4 2.6L4.6 6M4.6 13.4V10M11.4 13.4V10" stroke="#a9bad4" stroke-width="0.6" fill="none"/></svg><svg class="b" style="left:267.2px;top:777.6px;overflow:visible;" width="14" height="16" viewBox="0 0 14 16"><path d="M3.2 7.2V4.6Q3.2 1 6.8 1Q10.4 1 10.4 4.6V7.2" fill="none" stroke="#c6c6c6" stroke-width="1.2"/><rect x="0.8" y="7.2" width="12" height="8" rx="1" fill="#f4f4f4" stroke="#c6c6c6" stroke-width="1"/><circle cx="6.8" cy="11.2" r="1.6" fill="none" stroke="#cfcfcf" stroke-width="0.9"/></svg><svg class="b" style="left:210.4px;top:798px;overflow:visible;" width="16" height="16" viewBox="0 0 16 16"><path d="M0.6 8Q8 1.5 15.4 8Q8 14.5 0.6 8Z" fill="none" stroke="#a9a9a9" stroke-width="1"/><circle cx="8" cy="8" r="3.2" fill="none" stroke="#a9a9a9" stroke-width="1"/><path d="M1.5 1.2L14.8 14.6" stroke="#8a8a8a" stroke-width="1.2"/></svg><svg class="b" style="left:238px;top:798px;overflow:visible;" width="16" height="16" viewBox="0 0 16 16"><path d="M8 0.5L15 4.2V11.8L8 15.5L1 11.8V4.2Z" fill="#3d6499" stroke="#25528e" stroke-width="1"/><path d="M8 0.8L14.6 4.3L8 8L1.4 4.3Z" fill="#7f9cc4"/><path d="M8 8V15.2L14.6 11.7V4.4Z" fill="#2b5691"/><path d="M4.8 6.2L8 4.6L11.2 6.2V10L8 11.8L4.8 10Z" fill="#fff"/><path d="M8 8V11.6L11 10V6.4Z" fill="#d5dcea"/><path d="M1.2 8L4.8 8.2M14.8 8L11.2 8.2M8 0.8V4.6M8 11.8V15.2M4.6 2.6L11.4 6M11.4 2.6L4.6 6M4.6 13.4V10M11.4 13.4V10" stroke="#a9bad4" stroke-width="0.6" fill="none"/></svg><svg class="b" style="left:267.2px;top:797.6px;overflow:visible;" width="14" height="16" viewBox="0 0 14 16"><path d="M3.2 7.2V4.6Q3.2 1 6.8 1Q10.4 1 10.4 4.6V7.2" fill="none" stroke="#c6c6c6" stroke-width="1.2"/><rect x="0.8" y="7.2" width="12" height="8" rx="1" fill="#f4f4f4" stroke="#c6c6c6" stroke-width="1"/><circle cx="6.8" cy="11.2" r="1.6" fill="none" stroke="#cfcfcf" stroke-width="0.9"/></svg><svg class="b" style="left:210.4px;top:818px;overflow:visible;" width="16" height="16" viewBox="0 0 16 16"><path d="M0.6 8Q8 1.5 15.4 8Q8 14.5 0.6 8Z" fill="none" stroke="#a9a9a9" stroke-width="1"/><circle cx="8" cy="8" r="3.2" fill="none" stroke="#a9a9a9" stroke-width="1"/><path d="M1.5 1.2L14.8 14.6" stroke="#8a8a8a" stroke-width="1.2"/></svg><svg class="b" style="left:238px;top:818px;overflow:visible;" width="16" height="16" viewBox="0 0 16 16"><path d="M8 0.5L15 4.2V11.8L8 15.5L1 11.8V4.2Z" fill="#3d6499" stroke="#25528e" stroke-width="1"/><path d="M8 0.8L14.6 4.3L8 8L1.4 4.3Z" fill="#7f9cc4"/><path d="M8 8V15.2L14.6 11.7V4.4Z" fill="#2b5691"/><path d="M4.8 6.2L8 4.6L11.2 6.2V10L8 11.8L4.8 10Z" fill="#fff"/><path d="M8 8V11.6L11 10V6.4Z" fill="#d5dcea"/><path d="M1.2 8L4.8 8.2M14.8 8L11.2 8.2M8 0.8V4.6M8 11.8V15.2M4.6 2.6L11.4 6M11.4 2.6L4.6 6M4.6 13.4V10M11.4 13.4V10" stroke="#a9bad4" stroke-width="0.6" fill="none"/></svg><svg class="b" style="left:267.2px;top:817.6px;overflow:visible;" width="14" height="16" viewBox="0 0 14 16"><path d="M3.2 7.2V4.6Q3.2 1 6.8 1Q10.4 1 10.4 4.6V7.2" fill="none" stroke="#c6c6c6" stroke-width="1.2"/><rect x="0.8" y="7.2" width="12" height="8" rx="1" fill="#f4f4f4" stroke="#c6c6c6" stroke-width="1"/><circle cx="6.8" cy="11.2" r="1.6" fill="none" stroke="#cfcfcf" stroke-width="0.9"/></svg>
<svg class="b" style="left:1269px;top:173px;overflow:visible;" width="16" height="16" viewBox="0 0 16 16"><path d="M8 1V9.4L1.4 15M8 9.4L15.2 13.4" fill="none" stroke="#3f7d92" stroke-width="1.3"/></svg><svg class="b" style="left:1293px;top:173px;overflow:visible;" width="16" height="16" viewBox="0 0 16 16"><path d="M1 4.6H11.4V15H1Z" fill="#b5dcef" stroke="#000" stroke-width="1.2"/><path d="M1 4.6L4.6 1H15L11.4 4.6Z" fill="#d4ecf7" stroke="#000" stroke-width="1.1"/><path d="M11.4 4.6L15 1V11.4L11.4 15Z" fill="#8ec4de" stroke="#000" stroke-width="1.1"/></svg><svg class="b" style="left:1317px;top:173px;overflow:visible;" width="16" height="16" viewBox="0 0 16 16"><ellipse cx="8" cy="9" rx="7" ry="3.6" fill="none" stroke="#444" stroke-width="1"/><circle cx="8.6" cy="5.6" r="3.4" fill="#000"/><path d="M10 11.4L13 13.4L14.4 10.6" fill="none" stroke="#000" stroke-width="1.1"/></svg><svg class="b" style="left:1341px;top:173px;overflow:visible;" width="16" height="16" viewBox="0 0 16 16"><circle cx="8" cy="2.4" r="1.7" fill="#fff" stroke="#222" stroke-width="1"/><path d="M8 4V14.6" stroke="#222" stroke-width="1.2"/><path d="M6 7.4Q0.6 8.4 1 10.8Q2 13.4 8 13.6Q14.2 13.4 15 10.8Q15.2 8.6 10 7.4" fill="none" stroke="#222" stroke-width="1.1"/><path d="M9.6 11.4L12.4 13L10 15" fill="none" stroke="#000" stroke-width="1"/></svg><div class="b" style="left:1363px;top:169px;width:1px;height:24px;background:#c8c8c8;"></div><svg class="b" style="left:1371px;top:173px;overflow:visible;" width="15" height="16" viewBox="0 0 15 16"><rect x="1.6" y="2" width="6" height="12" fill="#a9d6ec"/><rect x="7.6" y="2" width="5.6" height="12" fill="#f7b6b6"/><path d="M7.6 2H1.6V14H7.6" fill="none" stroke="#000" stroke-width="1.2"/><path d="M7.6 2H13.2V14H7.6" fill="none" stroke="#f00000" stroke-width="1.2"/><path d="M7.6 0.6V15.4" stroke="#000" stroke-width="1" stroke-dasharray="1.3 1.1"/></svg><svg class="b" style="left:1395px;top:173px;overflow:visible;" width="16" height="16" viewBox="0 0 16 16"><path d="M2 2H14V14H2Z" fill="#a9d6ec"/><path d="M2 2H14L2 14Z" fill="#56f05e"/><rect x="2" y="2" width="12" height="12" fill="none" stroke="#000" stroke-width="1.1"/><path d="M0.6 15.4L15.4 0.6" stroke="#000" stroke-width="1"/></svg><svg class="b" style="left:1419px;top:173px;overflow:visible;" width="16" height="16" viewBox="0 0 16 16"><rect x="2" y="2" width="12" height="6" fill="#cbbdf2"/><rect x="2" y="8" width="12" height="6" fill="#a9d6ec"/><rect x="2" y="2" width="12" height="12" fill="none" stroke="#2a2aa0" stroke-width="1.3"/><path d="M0.6 8H15.4" stroke="#000" stroke-width="1" stroke-dasharray="1.4 1"/></svg><svg class="b" style="left:1443px;top:173px;overflow:visible;" width="16" height="16" viewBox="0 0 16 16"><path d="M1 4.6L8 1L15 4.6L8 8Z" fill="#f4a9b4" stroke="#333" stroke-width="0.8"/><path d="M1 4.6V7.4L8 11V8Z" fill="#b49fe0" stroke="#333" stroke-width="0.7"/><path d="M15 4.6V7.4L8 11V8Z" fill="#8a74c8" stroke="#333" stroke-width="0.7"/><path d="M1 7.4V10L8 13.4V11Z" fill="#8fd079" stroke="#333" stroke-width="0.7"/><path d="M15 7.4V10L8 13.4V11Z" fill="#5cae48" stroke="#333" stroke-width="0.7"/><path d="M1 10V12.4L8 15.6V13.4Z" fill="#9fd3ea" stroke="#333" stroke-width="0.7"/><path d="M15 10V12.4L8 15.6V13.4Z" fill="#68b0d2" stroke="#333" stroke-width="0.7"/></svg><svg class="b" style="left:1467px;top:173px;overflow:visible;" width="16" height="16" viewBox="0 0 16 16"><path d="M0.4 8.4Q8 0.6 15.6 8.4Q8 15.6 0.4 8.4Z" fill="#000"/><circle cx="8" cy="8.2" r="3" fill="#fff"/><circle cx="8" cy="8.2" r="1.7" fill="#000"/><path d="M2.4 14.6L13.8 1.6" stroke="#000" stroke-width="1.3"/><path d="M3.6 15.2L15 2.2" stroke="#f0f0f0" stroke-width="0.8"/></svg><div class="b" style="left:1489px;top:169px;width:1px;height:24px;background:#c8c8c8;"></div><svg class="b" style="left:1497px;top:173px;overflow:visible;" width="16" height="16" viewBox="0 0 16 16"><text x="0" y="6.4" font-size="7.4" font-weight="700" fill="#333" font-family="'Liberation Sans',sans-serif">3D</text><circle cx="9.6" cy="10.6" r="4" fill="#fff" stroke="#555" stroke-width="1" stroke-dasharray="1.6 1"/><circle cx="9.6" cy="10.6" r="1.5" fill="none" stroke="#777" stroke-width="0.8"/></svg>
<svg class="b" style="left:1532.7px;top:616px;overflow:visible;" width="12" height="8" viewBox="0 0 12 8"><path d="M0.6 1L5.6 6L10.6 1" fill="none" stroke="#3c3c3c" stroke-width="2"/></svg><svg class="b" style="left:1553.6px;top:633.5px;overflow:visible;" width="8" height="11" viewBox="0 0 8 11"><path d="M1 0.8L5.6 5.25L1 9.7" fill="none" stroke="#666" stroke-width="1.8"/></svg><svg class="b" style="left:1551.7px;top:656px;overflow:visible;" width="12" height="8" viewBox="0 0 12 8"><path d="M0.6 1L5.6 6L10.6 1" fill="none" stroke="#3c3c3c" stroke-width="2"/></svg><svg class="b" style="left:1870px;top:611px;overflow:visible;" width="16" height="16" viewBox="0 0 16 16"><path d="M0.6 8Q8 1.5 15.4 8Q8 14.5 0.6 8Z" fill="none" stroke="#a9a9a9" stroke-width="1"/><circle cx="8" cy="8" r="3.2" fill="none" stroke="#a9a9a9" stroke-width="1"/><path d="M1.5 1.2L14.8 14.6" stroke="#8a8a8a" stroke-width="1.2"/></svg><svg class="b" style="left:1899.4px;top:610.6px;overflow:visible;" width="14" height="16" viewBox="0 0 14 16"><path d="M3.4 7.2V4.4Q3.4 1 6.8 1Q10.2 1 10.2 4.4V5" fill="none" stroke="#5f7fb0" stroke-width="1.2"/><rect x="0.6" y="7" width="12.4" height="8.2" rx="1" fill="#8b97ad"/><rect x="6" y="9.6" width="1.7" height="3.4" fill="#e8ecf2"/></svg><svg class="b" style="left:1870px;top:631px;overflow:visible;" width="16" height="16" viewBox="0 0 16 16"><path d="M0.6 8Q8 1.5 15.4 8Q8 14.5 0.6 8Z" fill="none" stroke="#a9a9a9" stroke-width="1"/><circle cx="8" cy="8" r="3.2" fill="none" stroke="#a9a9a9" stroke-width="1"/><path d="M1.5 1.2L14.8 14.6" stroke="#8a8a8a" stroke-width="1.2"/></svg><svg class="b" style="left:1899.4px;top:630.6px;overflow:visible;" width="14" height="16" viewBox="0 0 14 16"><path d="M3.4 7.2V4.4Q3.4 1 6.8 1Q10.2 1 10.2 4.4V5" fill="none" stroke="#5f7fb0" stroke-width="1.2"/><rect x="0.6" y="7" width="12.4" height="8.2" rx="1" fill="#8b97ad"/><rect x="6" y="9.6" width="1.7" height="3.4" fill="#e8ecf2"/></svg><svg class="b" style="left:1870px;top:651px;overflow:visible;" width="16" height="16" viewBox="0 0 16 16"><path d="M0.6 8Q8 1.5 15.4 8Q8 14.5 0.6 8Z" fill="none" stroke="#a9a9a9" stroke-width="1"/><circle cx="8" cy="8" r="3.2" fill="none" stroke="#a9a9a9" stroke-width="1"/><path d="M1.5 1.2L14.8 14.6" stroke="#8a8a8a" stroke-width="1.2"/></svg><svg class="b" style="left:1899.4px;top:650.6px;overflow:visible;" width="14" height="16" viewBox="0 0 14 16"><path d="M3.4 7.2V4.4Q3.4 1 6.8 1Q10.2 1 10.2 4.4V5" fill="none" stroke="#5f7fb0" stroke-width="1.2"/><rect x="0.6" y="7" width="12.4" height="8.2" rx="1" fill="#8b97ad"/><rect x="6" y="9.6" width="1.7" height="3.4" fill="#e8ecf2"/></svg><svg class="b" style="left:1870px;top:671px;overflow:visible;" width="16" height="16" viewBox="0 0 16 16"><path d="M0.6 8Q8 1.5 15.4 8Q8 14.5 0.6 8Z" fill="none" stroke="#a9a9a9" stroke-width="1"/><circle cx="8" cy="8" r="3.2" fill="none" stroke="#a9a9a9" stroke-width="1"/><path d="M1.5 1.2L14.8 14.6" stroke="#8a8a8a" stroke-width="1.2"/></svg><svg class="b" style="left:1899.4px;top:670.6px;overflow:visible;" width="14" height="16" viewBox="0 0 14 16"><path d="M3.4 7.2V4.4Q3.4 1 6.8 1Q10.2 1 10.2 4.4V5" fill="none" stroke="#5f7fb0" stroke-width="1.2"/><rect x="0.6" y="7" width="12.4" height="8.2" rx="1" fill="#8b97ad"/><rect x="6" y="9.6" width="1.7" height="3.4" fill="#e8ecf2"/></svg><svg class="b" style="left:1870px;top:691px;overflow:visible;" width="16" height="16" viewBox="0 0 16 16"><path d="M0.6 8Q8 1.5 15.4 8Q8 14.5 0.6 8Z" fill="none" stroke="#a9a9a9" stroke-width="1"/><circle cx="8" cy="8" r="3.2" fill="none" stroke="#a9a9a9" stroke-width="1"/><path d="M1.5 1.2L14.8 14.6" stroke="#8a8a8a" stroke-width="1.2"/></svg><svg class="b" style="left:1899.4px;top:690.6px;overflow:visible;" width="14" height="16" viewBox="0 0 14 16"><path d="M3.4 7.2V4.4Q3.4 1 6.8 1Q10.2 1 10.2 4.4V5" fill="none" stroke="#5f7fb0" stroke-width="1.2"/><rect x="0.6" y="7" width="12.4" height="8.2" rx="1" fill="#8b97ad"/><rect x="6" y="9.6" width="1.7" height="3.4" fill="#e8ecf2"/></svg>
<svg class="b" style="left:8px;top:1014.5px;overflow:visible;" width="16" height="16" viewBox="0 0 16 16"><circle cx="8" cy="8" r="7.8" fill="#1c8ad1"/><circle cx="8" cy="4.2" r="1.3" fill="#fff"/><path d="M6.2 6.8H9V12H10.2V13.2H6V12H7.2V8H6.2Z" fill="#fff"/></svg>
</body></html>
